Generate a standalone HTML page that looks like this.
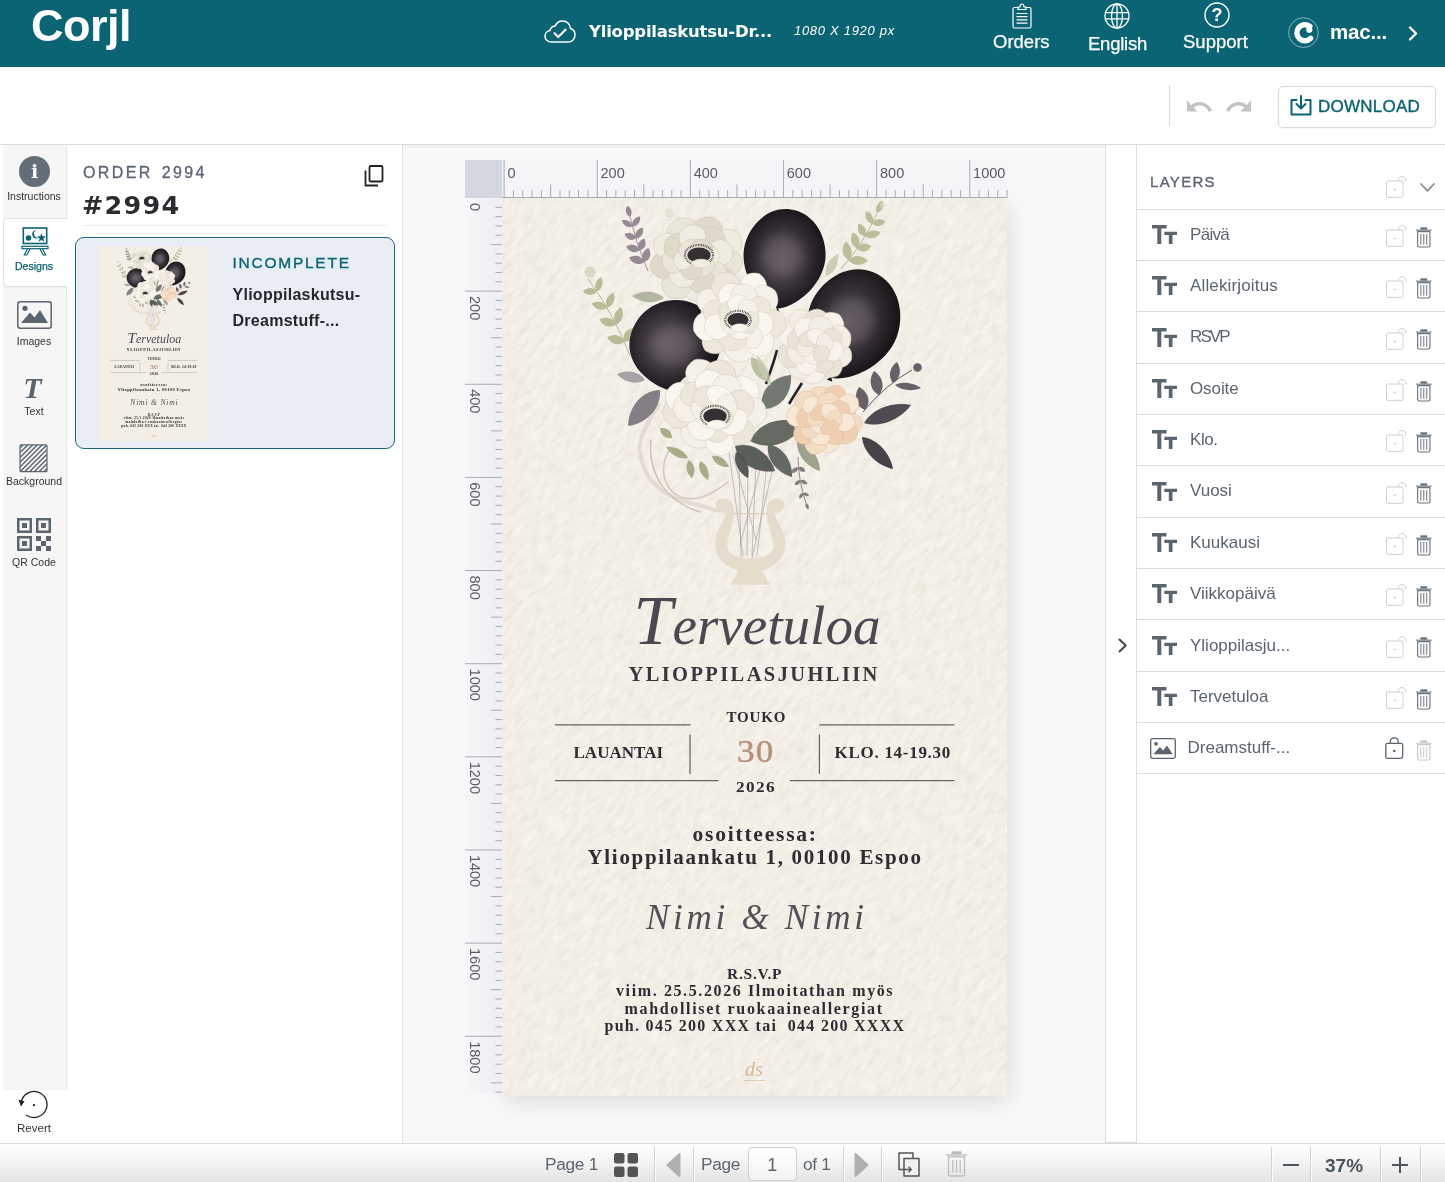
<!DOCTYPE html>
<html lang="en">
<head>
<meta charset="utf-8">
<title>Corjl</title>
<style>
*{box-sizing:border-box;margin:0;padding:0}
html,body{width:1445px;height:1182px;overflow:hidden;background:#fff}
body{position:relative;will-change:transform;font-family:"Liberation Sans",sans-serif;color:#5b6570}
.abs{position:absolute}
.t{position:absolute;white-space:nowrap;line-height:1}
svg{position:absolute;overflow:visible}
/* header */
#hdr{position:absolute;left:0;top:0;width:1445px;height:67px;background:#0b6474}
#hdr .t{color:#fff}
.mont{font-family:"DejaVu Sans","Liberation Sans",sans-serif;font-weight:bold}
/* toolbar */
#tb{position:absolute;left:0;top:67px;width:1445px;height:78px;background:#fff;border-bottom:1px solid #dcdcdc}
/* sidebar */
#side{position:absolute;left:3px;top:145px;width:64px;height:945px;background:#f6f6f6;border-right:1px solid #e6e6e6}
#side .lbl,#revert .lbl{position:absolute;left:-1px;width:64px;text-align:center;font-size:10.5px;line-height:12px;color:#333}
#tab{position:absolute;left:0px;top:73px;width:65px;height:69px;background:#fff;border:1px solid #e4e4e4;border-right:none;border-radius:5px 0 0 5px;box-shadow:0 1px 2px rgba(0,0,0,.05)}
/* left panel */
#lp{position:absolute;left:67px;top:145px;width:336px;height:999px;background:#fff;border-right:1px solid #e2e2e2}
/* work area */
#work{position:absolute;left:403px;top:145px;width:702px;height:999px;background:#f8f8f8;box-shadow:inset 0 4px 4px -3px rgba(0,0,0,.07)}
/* strip */
#strip{position:absolute;left:1105px;top:145px;width:32px;height:998px;background:#fff;border:1px solid #dedede;border-top:none}
/* layers */
#layers{position:absolute;left:1137px;top:145px;width:308px;height:999px;background:#fff}
.row{position:absolute;left:0;width:308px;height:51.3px;border-bottom:1px solid #dcdcdc}
.row .nm{position:absolute;left:53px;top:14.3px;font-size:17px;line-height:22px;color:#5b6570;white-space:nowrap}
/* bottom */
#bot{position:absolute;left:0;top:1143px;width:1445px;height:39px;border-top:1px solid #dadada;background:linear-gradient(#ffffff,#f4f4f4 45%,#e4e4e4)}
#bot .t{color:#5b6570;font-size:17.3px;letter-spacing:-.3px}
.vd{position:absolute;top:3px;width:1px;height:36px;background:#d2d2d2;box-shadow:1px 0 0 rgba(255,255,255,.8)}
</style>
</head>
<body>
<div id="hdr">
  <div class="t" id="logo" style="left:31px;top:-1px;font-size:45px;font-weight:bold;letter-spacing:-0.5px;line-height:54px">Corjl</div>
  <!-- cloud check -->
  <svg style="left:544px;top:20px" width="32" height="23" viewBox="0 0 32 23" fill="none" stroke="#fff" stroke-width="1.5" stroke-linecap="round" stroke-linejoin="round">
    <path d="M7.5 22 C3.5 22 1 19.3 1 16.2 C1 13.2 3.2 10.9 6 10.6 C6.2 7.9 8.5 6 11 6.3 C12.3 3 15.3 1 18.6 1 C23 1 26.3 4.300 26.500 8.500 C29.300 9.200 31 11.700 31 14.800 C31 18.800 28 22 24.200 22 Z"/>
    <path d="M10.500 13.300 L14.200 17 L21.500 9.700" stroke-width="2.2"/>
  </svg>
  <div class="t mont" id="ttl" style="left:589px;top:22px;font-size:16.5px;line-height:20px;letter-spacing:-.22px">Ylioppilaskutsu-Dr...</div>
  <div class="t" id="dim" style="left:794px;top:23px;font-size:13px;line-height:16px;font-style:italic;letter-spacing:0.7px">1080 X 1920 px</div>
  <!-- orders clipboard -->
  <svg style="left:1012px;top:3px" width="20" height="26" viewBox="0 0 20 26" fill="none" stroke="#fff" stroke-width="1.2">
    <rect x="1" y="4.500" width="18" height="20.500" rx="1.5"/>
    <path d="M6 6.500 V4 H8 C8 2.300 8.800 1 10 1 C11.200 1 12 2.300 12 4 H14 V6.500 Z" fill="#0b6474"/>
    <path d="M4.500 10.500 H15.500 M4.500 13.700 H15.500 M4.500 16.900 H15.500 M4.500 20.100 H15.500" stroke-width="1.200"/>
  </svg>
  <div class="t" id="ord" style="left:993px;top:31px;font-size:18.500px;line-height:22px;-webkit-text-stroke:.25px #fff">Orders</div>
  <!-- globe -->
  <svg style="left:1104px;top:3px" width="26" height="26" viewBox="0 0 26 26" fill="none" stroke="#fff" stroke-width="1.300">
    <circle cx="13" cy="13" r="12"/>
    <ellipse cx="13" cy="13" rx="5.500" ry="12"/>
    <path d="M13 1 V25 M1.700 9.700 H24.300 M1.700 15.800 H24.300"/>
  </svg>
  <div class="t" id="eng" style="left:1088px;top:32.500px;font-size:18.500px;line-height:22px;letter-spacing:-.25px;-webkit-text-stroke:.25px #fff">English</div>
  <!-- support -->
  <svg style="left:1204px;top:2px" width="26" height="26" viewBox="0 0 26 26" fill="none" stroke="#fff" stroke-width="1.400">
    <circle cx="13" cy="13" r="12"/>
  </svg>
  <div class="t" style="left:1204px;top:5px;width:26px;text-align:center;font-size:18px;font-weight:bold;line-height:20px">?</div>
  <div class="t" id="sup" style="left:1183px;top:31px;font-size:18.500px;line-height:22px;-webkit-text-stroke:.25px #fff">Support</div>
  <!-- user -->
  <svg style="left:1288px;top:17px" width="31" height="31" viewBox="0 0 31 31" fill="none">
    <circle cx="15.500" cy="15.600" r="14.900" stroke="#8fb9c2" stroke-width=".9"/>
    <path d="M22.600 21.300 A8 8 0 1 1 21.800 9.400" stroke="#fff" stroke-width="5.400" stroke-linecap="round"/>
    <circle cx="21.300" cy="12.800" r="3.100" fill="#fff"/>
  </svg>
  <div class="t" id="mac" style="left:1330px;top:19.500px;font-size:20.500px;line-height:24px;font-weight:bold;letter-spacing:-.2px">mac...</div>
  <svg style="left:1408px;top:26px" width="10" height="15" viewBox="0 0 10 15" fill="none" stroke="#fff" stroke-width="2.400" stroke-linecap="round" stroke-linejoin="round"><path d="M2 1.500 L8 7.500 L2 13.500"/></svg>
</div>
<div id="tb">
  <div class="abs" style="left:1169px;top:18px;width:1px;height:41px;background:#dadada"></div>
  <!-- undo / redo -->
  <svg style="left:1186px;top:32px" width="27" height="14" viewBox="0 0 27 14"><path d="M1 1 L1 12.500 L11.500 12.500 L7.600 8.600 C9.300 7.200 11.400 6.400 13.600 6.400 C17.700 6.400 21.200 9 22.700 12.800 L26 11.700 C24.100 6.600 19.300 3 13.600 3 C10.400 3 7.500 4.200 5.200 6.200 Z" fill="#c3c3c3"/></svg>
  <svg style="left:1225px;top:32px" width="27" height="14" viewBox="0 0 27 14"><path transform="translate(27 0) scale(-1 1)" d="M1 1 L1 12.500 L11.500 12.500 L7.600 8.600 C9.300 7.200 11.400 6.400 13.600 6.400 C17.700 6.400 21.200 9 22.700 12.800 L26 11.700 C24.100 6.600 19.300 3 13.600 3 C10.400 3 7.500 4.200 5.200 6.200 Z" fill="#c3c3c3"/></svg>
  <div class="abs" style="left:1278px;top:18.5px;width:158px;height:42px;border:1px solid #d9d9d9;border-radius:5px;background:#fff;box-shadow:0 1px 1px rgba(0,0,0,.04)"></div>
  <svg style="left:1290px;top:28px" width="22" height="21" viewBox="0 0 22 21" fill="none" stroke="#0b6474" stroke-width="2" stroke-linejoin="round" stroke-linecap="round">
    <path d="M6.500 5 H1.500 V19.500 H20.500 V5 H15.500"/>
    <path d="M11 1 V13 M6.500 9 L11 13.500 L15.500 9"/>
  </svg>
  <div class="t" id="dl" style="left:1318px;top:29.5px;font-size:17px;line-height:20px;color:#0b6474;-webkit-text-stroke:.4px #0b6474;letter-spacing:.25px">DOWNLOAD</div>
</div>
<div id="side">
  <!-- instructions -->
  <svg style="left:16px;top:11px" width="31" height="31" viewBox="0 0 31 31"><circle cx="15.500" cy="15.500" r="15.500" fill="#646e79"/></svg>
  <div class="t" style="left:16px;top:14px;width:31px;text-align:center;font-family:'DejaVu Serif','Liberation Serif',serif;font-weight:bold;font-size:19px;line-height:24px;color:#fff">i</div>
  <div class="lbl" style="top:44.500px">Instructions</div>
  <div id="tab"></div>
  <!-- designs -->
  <svg style="left:18px;top:82px" width="28" height="29" viewBox="0 0 28 29" fill="none" stroke="#0b6474" stroke-width="1.600">
    <rect x="2.300" y="1" width="23.400" height="15.500"/>
    <circle cx="7.500" cy="11" r="2.800" fill="#0b6474" stroke="none"/>
    <path d="M15.500 3 A4.300 4.300 0 1 0 18.500 10.300 A3.600 3.600 0 0 1 15.500 3 Z" fill="#0b6474" stroke="none"/>
    <path d="M20.500 6.200 L21.700 9.300 L25 9.500 L22.400 11.600 L23.300 14.800 L20.500 13 L17.700 14.800 L18.600 11.600 L16 9.500 L19.300 9.300 Z" fill="#0b6474" stroke="none"/>
    <rect x="1" y="19.300" width="26" height="2.400" stroke-width="1.200"/>
    <path d="M6.500 22 L3.300 28 H5.800 L9 22 M21.500 22 L24.700 28 H22.200 L19 22" stroke-width="1.200"/>
  </svg>
  <div class="lbl" style="top:114.500px;color:#0b6474;-webkit-text-stroke:.25px #0b6474">Designs</div>
  <!-- images -->
  <svg style="left:13.500px;top:156px" width="35" height="28" viewBox="0 0 35 28">
    <rect x=".8" y=".8" width="33.400" height="26.400" rx="2.500" fill="none" stroke="#5b6570" stroke-width="1.500"/>
    <circle cx="8" cy="7.300" r="2.600" fill="#5b6570"/>
    <path d="M4 22 L13 11.500 L17.500 16.500 L23 9 L31 22 Z" fill="#5b6570"/>
  </svg>
  <div class="lbl" style="top:189.500px">Images</div>
  <!-- text -->
  <div class="t" style="left:11.500px;top:228px;width:36px;text-align:center;font-family:'Liberation Serif',serif;font-style:italic;font-weight:bold;font-size:30px;line-height:30px;color:#5b6570">T</div>
  <div class="lbl" style="top:259.500px">Text</div>
  <!-- background -->
  <svg style="left:16.200px;top:298.500px" width="29" height="28.500" viewBox="0 0 30 30">
    <defs><clipPath id="bgc"><rect x="1" y="1" width="28" height="28"/></clipPath></defs>
    <g clip-path="url(#bgc)" stroke="#5b6570" stroke-width="1.500">
      <path d="M-30 30 L0 0 M-25 30 L5 0 M-20 30 L10 0 M-15 30 L15 0 M-10 30 L20 0 M-5 30 L25 0 M0 30 L30 0 M5 30 L35 0 M10 30 L40 0 M15 30 L45 0 M20 30 L50 0 M25 30 L55 0 M30 30 L60 0"/>
    </g>
    <rect x=".8" y=".8" width="28.400" height="28.400" rx="1" fill="none" stroke="#5b6570" stroke-width="1.300"/>
  </svg>
  <div class="lbl" style="top:330px">Background</div>
  <!-- qr -->
  <svg style="left:14px;top:373px" width="34" height="33" viewBox="0 0 34 33" fill="#5b6570">
    <path fill-rule="evenodd" d="M0 0 H15 V15 H0 Z M2.500 2.500 V12.500 H12.500 V2.500 Z M5 5 H10 V10 H5 Z"/>
    <path fill-rule="evenodd" d="M19 0 H34 V15 H19 Z M21.500 2.500 V12.500 H31.500 V2.500 Z M24 5 H29 V10 H24 Z"/>
    <path fill-rule="evenodd" d="M0 18 H15 V33 H0 Z M2.500 20.500 V30.500 H12.500 V20.500 Z M5 23 H10 V28 H5 Z"/>
    <path d="M19 18 H24 V23 H19 Z M29 18 H34 V23 H29 Z M24 23 H29 V28 H24 Z M19 28 H24 V33 H19 Z M29 28 H34 V33 H29 Z"/>
  </svg>
  <div class="lbl" style="top:411px">QR Code</div>
</div>
<!-- revert -->
<div id="revert" class="abs" style="left:3px;top:1090px;width:64px;height:53px;background:#fff">
  <svg style="left:15.500px;top:-0.400px" width="30" height="30" viewBox="0 0 30 30" fill="none" stroke="#222" stroke-width="1.300">
    <path d="M2.200 12.300 A13 13 0 1 1 7.600 25.200" stroke-linecap="round"/>
    <path d="M-0.500 9.800 L5.500 11.300 L2 16.500 Z" fill="#222" stroke="none"/>
    <circle cx="15" cy="15.200" r="1.100" fill="#222" stroke="none"/>
  </svg>
  <div class="lbl" style="top:31.500px;font-size:11.500px">Revert</div>
</div>
<div id="lp">
  <div class="t" id="ordl" style="left:16px;top:19px;font-size:16px;line-height:18px;letter-spacing:2.4px;color:#5b6570;-webkit-text-stroke:.3px #5b6570;word-spacing:2px">ORDER 2994</div>
  <div class="t mont" id="ordn" style="left:15px;top:44.500px;font-size:25.500px;line-height:30px;color:#2a2c30;letter-spacing:1.2px">#2994</div>
  <svg style="left:297px;top:20px" width="20" height="22" viewBox="0 0 20 22" fill="none" stroke="#222" stroke-width="1.800" stroke-linejoin="round">
    <rect x="5.500" y="1" width="13" height="15.500" rx="1.200"/>
    <path d="M1.500 5.500 V20.500 H14"/>
  </svg>
  <div class="abs" style="left:16px;top:80px;width:304px;height:1px;background:#ececec"></div>
  <div class="abs" id="card" style="left:8px;top:92px;width:320px;height:212px;border:1.500px solid #176b7a;border-radius:9px;background:#e8eef3"></div>
  <div class="t" id="inc" style="left:165.500px;top:108.5px;font-size:15.500px;line-height:18px;letter-spacing:1.750px;color:#0b6474;-webkit-text-stroke:.35px #0b6474">INCOMPLETE</div>
  <div class="t" id="nm1" style="left:165.500px;top:137px;font-size:16px;line-height:26px;font-weight:bold;color:#24282c;letter-spacing:.27px">Ylioppilaskutsu-<br>Dreamstuff-...</div>
  <svg id="thumb" style="left:32.200px;top:101.300px" width="109.700" height="195.100" viewBox="502 198 505 898">
<rect x="502" y="198" width="505" height="898" fill="#f3efe7"/>
<g fill="none" stroke="#d6cbc3" stroke-linecap="round">
<path d="M659 405 C645 425 638 440 640 452 C643 478 660 495 690 503 C700 505 710 508 718 511" stroke-width="4" opacity=".55"/>
<path d="M668 452 C660 468 662 488 680 497 C697 503 712 494 728 482" stroke-width="1.8"/>
<path d="M651 440 C648 470 662 500 700 512" stroke-width="1.4" stroke="#c9bcb2"/>
</g>
<g fill="none" stroke="#9a98a4" stroke-width="0.6">
<path d="M729 452 L743 556"/>
<path d="M739 460 L741 558"/>
<path d="M748 462 L747 556"/>
<path d="M756 462 L752 556"/>
<path d="M768 455 L757 556"/>
<path d="M777 450 L752 558"/>
<path d="M733 455 L756 540"/>
<path d="M760 470 L740 545"/>
</g>
<g transform="translate(620 420) scale(0.19376)"><path d="M672 850 L568 850 Q600 800 610 775 C540 760 480 700 492 620 C500 560 540 520 548 480 C520 480 490 460 495 430 C500 400 560 395 580 430 C592 455 585 480 585 500 C580 560 545 620 555 660 C565 700 620 715 672 715 C724 715 779 700 789 660 C799 620 764 560 759 500 C759 480 752 455 764 430 C784 395 844 400 849 430 C854 460 824 480 796 480 C804 520 844 560 852 620 C864 700 804 760 734 775 Q744 800 776 850 Z" fill="#e5dccb"/><path d="M585 483 H760" stroke="#dccfba" stroke-width="6" fill="none"/></g>
<path d="M648.0 271.0 Q636.3 244.9 630.0 217.0" fill="none" stroke="#8b8189" stroke-width="0.9" opacity="0.9"/>
<path d="M644.1 261.9 C641.8 254.8 635.2 254.7 630.5 257.7 C632.7 262.8 638.2 266.5 644.1 261.9Z" fill="#8b8189" opacity="0.9"/>
<path d="M644.1 261.9 C651.4 261.1 652.8 254.7 650.7 249.7 C645.2 250.7 640.7 255.3 644.1 261.9Z" fill="#8b8189" opacity="0.9"/>
<path d="M639.7 250.3 C638.0 243.5 631.7 242.7 626.9 244.9 C628.6 249.9 633.7 253.9 639.7 250.3Z" fill="#8b8189" opacity="0.9"/>
<path d="M639.7 250.3 C646.5 248.3 647.2 241.7 644.9 236.9 C639.9 238.9 636.0 244.3 639.7 250.3Z" fill="#8b8189" opacity="0.9"/>
<path d="M635.8 238.6 C633.6 232.5 627.7 232.3 623.5 234.7 C625.5 239.1 630.6 242.3 635.8 238.6Z" fill="#8b8189" opacity="0.9"/>
<path d="M635.8 238.6 C641.9 237.4 642.6 232.0 640.5 227.9 C636.0 229.1 632.5 233.3 635.8 238.6Z" fill="#8b8189" opacity="0.9"/>
<path d="M632.4 226.6 C630.9 220.8 625.2 219.5 620.9 221.0 C622.3 225.3 626.9 229.1 632.4 226.6Z" fill="#8b8189" opacity="0.9"/>
<path d="M632.4 226.6 C638.0 225.8 639.0 220.8 637.4 216.9 C633.2 217.9 629.8 221.6 632.4 226.6Z" fill="#8b8189" opacity="0.9"/>
<path d="M630.0 217.0 C633.3 212.6 630.9 207.6 627.4 205.4 C625.1 208.9 625.1 214.4 630.0 217.0Z" fill="#8b8189" opacity="0.9"/>
<path d="M630.0 356.0 Q614.4 314.6 588.0 279.0" fill="none" stroke="#a9ad8a" stroke-width="0.9" opacity="0.95"/>
<path d="M624.2 341.8 C620.7 333.1 611.3 332.2 604.9 335.2 C608.2 341.5 616.2 346.5 624.2 341.8Z" fill="#b4b892" opacity="0.95"/>
<path d="M624.2 341.8 C633.0 340.3 634.8 332.2 632.6 326.0 C626.1 327.6 620.5 333.7 624.2 341.8Z" fill="#b4b892" opacity="0.95"/>
<path d="M616.1 324.5 C614.3 316.8 607.3 316.3 602.2 319.2 C604.1 324.8 609.7 328.9 616.1 324.5Z" fill="#b4b892" opacity="0.95"/>
<path d="M616.1 324.5 C624.1 323.4 625.9 316.2 623.8 310.5 C617.9 311.8 612.8 317.2 616.1 324.5Z" fill="#b4b892" opacity="0.95"/>
<path d="M607.0 307.7 C603.3 301.6 596.9 302.9 593.2 306.8 C596.4 311.1 602.5 313.3 607.0 307.7Z" fill="#b4b892" opacity="0.95"/>
<path d="M607.0 307.7 C614.1 304.6 614.5 297.0 611.7 291.8 C606.6 294.6 602.8 301.3 607.0 307.7Z" fill="#b4b892" opacity="0.95"/>
<path d="M596.9 291.5 C592.7 286.1 586.3 287.6 582.7 291.3 C586.2 295.1 592.5 296.8 596.9 291.5Z" fill="#b4b892" opacity="0.95"/>
<path d="M596.9 291.5 C603.2 289.4 603.6 283.2 601.1 278.8 C596.5 280.8 593.1 286.0 596.9 291.5Z" fill="#b4b892" opacity="0.95"/>
<circle cx="590" cy="272" r="5.500" fill="#d3d4ba" opacity=".85"/>
<circle cx="669" cy="213" r="4.500" fill="#dcdccb" opacity=".7"/>
<path d="M841.0 269.0 Q863.5 243.9 877.0 213.0" fill="none" stroke="#a9ad8a" stroke-width="0.9" opacity="0.95"/>
<path d="M848.5 260.1 C854.4 254.0 850.8 247.7 845.2 245.0 C841.2 249.9 840.7 257.1 848.5 260.1Z" fill="#b8bb95" opacity="0.95"/>
<path d="M848.5 260.1 C854.1 266.6 861.1 263.7 864.5 258.3 C860.0 253.9 852.6 252.6 848.5 260.1Z" fill="#b8bb95" opacity="0.95"/>
<path d="M857.2 248.5 C862.3 242.3 858.7 235.9 853.3 233.3 C849.9 238.2 849.8 245.5 857.2 248.5Z" fill="#b8bb95" opacity="0.95"/>
<path d="M857.2 248.5 C862.8 254.4 869.9 251.6 873.5 246.7 C868.9 242.6 861.4 241.5 857.2 248.5Z" fill="#b8bb95" opacity="0.95"/>
<path d="M865.0 236.3 C869.0 230.2 865.0 225.1 859.9 223.5 C857.3 228.2 858.0 234.6 865.0 236.3Z" fill="#b8bb95" opacity="0.95"/>
<path d="M865.0 236.3 C869.9 242.0 876.7 239.9 880.4 235.6 C876.3 231.6 869.4 230.2 865.0 236.3Z" fill="#b8bb95" opacity="0.95"/>
<path d="M872.0 223.6 C874.7 217.4 870.4 213.0 865.5 211.9 C863.8 216.6 865.4 222.7 872.0 223.6Z" fill="#b8bb95" opacity="0.95"/>
<path d="M872.0 223.6 C877.3 228.0 883.4 225.2 886.2 220.9 C882.0 217.9 875.3 217.5 872.0 223.6Z" fill="#b8bb95" opacity="0.95"/>
<path d="M877.0 213.0 C883.1 211.3 884.1 205.2 882.3 200.8 C877.9 202.5 874.1 207.4 877.0 213.0Z" fill="#b8bb95" opacity="0.95"/>
<circle cx="882" cy="205" r="2.500" fill="#d3d4ba" opacity=".8"/>
<path d="M826.0 276.0 C835.7 272.8 839.3 261.8 838.0 254.0 C830.7 257.2 823.5 266.0 826.0 276.0Z" fill="#c3c6a6" opacity="0.8"/>
<path d="M863 412 Q885 385 912 370" fill="none" stroke="#5f5860" stroke-width="1"/>
<path d="M865.0 410.0 C872.4 400.7 866.9 391.1 859.0 387.0 C854.1 394.4 854.0 405.5 865.0 410.0Z" fill="#5f5860" opacity="0.95"/>
<path d="M879.0 395.0 C886.3 386.0 881.4 375.7 874.0 371.0 C869.1 378.3 868.7 389.6 879.0 395.0Z" fill="#5f5860" opacity="0.95"/>
<path d="M893.0 383.0 C901.6 378.1 901.2 368.2 897.0 362.0 C890.8 366.3 886.8 375.3 893.0 383.0Z" fill="#5f5860" opacity="0.95"/>
<path d="M895.0 385.0 C902.2 391.4 914.1 391.1 921.0 388.0 C914.9 383.4 903.4 380.4 895.0 385.0Z" fill="#5f5860" opacity="0.95"/>
<circle cx="917.500" cy="367.500" r="4.300" fill="#5f5860" opacity=".95"/>
<path d="M864.0 423.0 C882.4 428.8 902.3 417.3 911.0 405.0 C896.2 401.7 873.8 406.4 864.0 423.0Z" fill="#4a454c" opacity="0.97"/>
<path d="M862.0 437.0 C863.4 454.3 879.7 466.4 893.0 469.0 C890.8 455.6 879.2 438.9 862.0 437.0Z" fill="#403c42" opacity="0.97"/>
<path d="M660.0 390.0 C639.2 390.8 628.2 410.0 628.0 426.0 C643.8 424.0 661.6 410.8 660.0 390.0Z" fill="#7a757c" opacity="0.92"/>
<path d="M645.0 380.0 C638.3 370.4 625.2 370.0 617.0 374.0 C622.8 381.0 634.9 386.0 645.0 380.0Z" fill="#9a949a" opacity="0.85"/>
<path d="M664.0 298.0 C654.9 289.4 640.3 290.9 632.0 296.0 C639.7 302.1 653.9 305.4 664.0 298.0Z" fill="#9ea28c" opacity="0.75"/>
<path d="M668.0 305.0 C657.1 303.5 645.2 310.9 640.0 318.0 C648.8 318.6 662.1 314.3 668.0 305.0Z" fill="#b7b9a4" opacity="0.7"/>
<g transform="rotate(8 784.0 259.0)">
<path d="M784.0 209.0 C809.4 209.0 825.0 234.0 825.0 255.0 C825.0 281.5 801.2 306.0 784.0 309.0 C766.8 306.0 743.0 281.5 743.0 255.0 C743.0 234.0 758.6 209.0 784.0 209.0Z" fill="url(#bg1)"/>
<ellipse cx="782.0" cy="256.5" rx="20.5" ry="21.0" fill="#8a8088" opacity="0.32" filter="url(#blur4)"/>
<path d="M781.0 312.0 L784.0 307.5 L787.0 312.0Z" fill="#1b181c"/>
</g>
<g transform="rotate(22 852.0 325.0)">
<path d="M852.0 268.0 C880.5 268.0 898.0 296.5 898.0 320.4 C898.0 350.6 871.3 378.6 852.0 382.0 C832.7 378.6 806.0 350.6 806.0 320.4 C806.0 296.5 823.5 268.0 852.0 268.0Z" fill="url(#bg2)"/>
<ellipse cx="849.7" cy="322.1" rx="23.0" ry="23.9" fill="#8a8088" opacity="0.32" filter="url(#blur4)"/>
<path d="M849.0 385.0 L852.0 380.5 L855.0 385.0Z" fill="#1b181c"/>
</g>
<g transform="rotate(-12 676.0 347.0)">
<path d="M676.0 300.0 C704.5 300.0 722.0 323.5 722.0 343.2 C722.0 368.1 695.3 391.2 676.0 394.0 C656.7 391.2 630.0 368.1 630.0 343.2 C630.0 323.5 647.5 300.0 676.0 300.0Z" fill="url(#bg3)"/>
<ellipse cx="673.7" cy="344.6" rx="23.0" ry="19.7" fill="#8a8088" opacity="0.32" filter="url(#blur4)"/>
</g>
<path d="M777 350 C774 362 770 372 766 384" stroke="#242126" stroke-width="2.6" fill="none"/>
<path d="M802 383 C797 391 793 397 789 404" stroke="#242126" stroke-width="2.6" fill="none"/>
<path d="M797.0 441.0 C796.0 456.1 808.7 467.8 820.0 471.0 C819.8 459.2 811.8 443.9 797.0 441.0Z" fill="#969c85" opacity="0.92"/>
<path d="M762.0 409.0 C782.9 409.2 792.3 390.8 791.0 375.0 C775.2 376.2 758.5 388.4 762.0 409.0Z" fill="#6f746d" opacity="0.97"/>
<path d="M768.0 444.0 C765.5 461.0 779.2 473.7 792.0 477.0 C792.8 463.8 784.9 446.8 768.0 444.0Z" fill="#5f645e" opacity="0.97"/>
<path d="M735.0 446.0 C739.1 466.2 759.4 473.7 775.0 471.0 C770.6 455.8 754.9 440.8 735.0 446.0Z" fill="#555a55" opacity="0.97"/>
<path d="M750.0 441.0 C771.6 453.1 794.3 440.3 804.0 424.0 C786.7 416.2 760.8 418.7 750.0 441.0Z" fill="#626760" opacity="0.98"/>
<path d="M736.0 452.0 C732.3 463.2 739.9 473.8 748.0 478.0 C750.1 469.2 746.9 456.4 736.0 452.0Z" fill="#4e534f" opacity="0.95"/>
<path d="M798.0 457.0 Q798.3 480.6 806.0 503.0" fill="none" stroke="#77736f" stroke-width="0.9" opacity="0.9"/>
<path d="M798.5 467.4 C798.8 471.6 802.5 472.9 805.6 472.2 C805.1 469.1 802.5 466.1 798.5 467.4Z" fill="#77736f" opacity="0.9"/>
<path d="M798.5 467.4 C794.7 465.9 792.1 468.7 791.6 471.8 C794.6 472.6 798.2 471.5 798.5 467.4Z" fill="#77736f" opacity="0.9"/>
<path d="M800.2 480.3 C801.3 484.1 805.2 484.8 808.0 483.8 C806.9 481.0 803.7 478.6 800.2 480.3Z" fill="#77736f" opacity="0.9"/>
<path d="M800.2 480.3 C796.3 480.3 794.7 483.6 795.1 486.5 C797.9 486.3 800.9 484.1 800.2 480.3Z" fill="#77736f" opacity="0.9"/>
<path d="M803.0 493.0 C804.5 496.0 808.0 496.0 810.2 494.6 C808.8 492.4 805.7 490.9 803.0 493.0Z" fill="#77736f" opacity="0.9"/>
<path d="M803.0 493.0 C799.6 492.7 797.9 495.6 797.9 498.2 C800.5 498.2 803.3 496.4 803.0 493.0Z" fill="#77736f" opacity="0.9"/>
<path d="M806.0 503.0 C804.5 505.7 806.2 508.5 808.3 509.6 C809.3 507.4 808.9 504.2 806.0 503.0Z" fill="#77736f" opacity="0.9"/>
<path d="M767.0 381.0 C769.7 368.8 760.2 359.5 751.0 357.0 C749.8 366.5 754.7 378.8 767.0 381.0Z" fill="#b7ba98" opacity="0.9"/>
<path d="M757.0 356.0 C755.8 367.5 763.7 380.3 771.0 386.0 C771.3 376.7 766.6 362.5 757.0 356.0Z" fill="#c6c9ad" opacity="0.8"/>
<path d="M688.0 458.0 C684.1 449.3 673.4 446.0 666.0 447.0 C669.6 453.5 678.7 460.1 688.0 458.0Z" fill="#a5a883" opacity="0.95"/>
<path d="M689.0 460.0 C684.0 466.4 687.1 474.2 692.0 478.0 C695.4 472.8 695.8 464.4 689.0 460.0Z" fill="#a5a883" opacity="0.95"/>
<path d="M700.0 461.0 C696.9 469.0 702.1 476.9 708.0 480.0 C709.9 473.6 707.9 464.4 700.0 461.0Z" fill="#a5a883" opacity="0.95"/>
<path d="M712.0 456.0 C713.8 464.3 722.5 467.8 729.0 467.0 C727.0 460.7 720.4 454.3 712.0 456.0Z" fill="#a5a883" opacity="0.95"/>
<path d="M672.0 438.0 C672.2 430.4 665.7 427.3 660.0 428.0 C660.3 433.7 664.6 439.6 672.0 438.0Z" fill="#a5a883" opacity="0.95"/>
<g transform="translate(697.0 259.0) rotate(-15) scale(1 0.9) translate(-697.0 -259.0)">
<circle cx="697.0" cy="259.0" r="40.3" fill="#dfdaca"/>
<path d="M708.0 247.0 C715.8 250.5 725.7 249.6 732.0 242.8 C738.0 236.2 734.2 227.3 730.5 222.5 C725.5 219.3 716.2 216.2 710.2 222.8 C703.9 229.6 703.8 239.5 708.0 247.0Z" fill="#e9e5d8" stroke="#c5bea9" stroke-width="0.45" opacity="1"/>
<path d="M713.3 257.9 C716.4 266.2 723.9 272.7 732.9 272.1 C741.5 271.6 744.8 262.1 745.3 255.9 C744.0 249.8 739.5 240.8 730.9 241.3 C721.9 241.9 715.3 249.3 713.3 257.9Z" fill="#dfdaca" stroke="#c5bea9" stroke-width="0.45" opacity="1"/>
<path d="M709.2 269.8 C705.7 277.7 706.6 287.4 713.4 293.4 C719.9 299.1 728.7 294.9 733.4 291.1 C736.6 286.0 739.7 276.7 733.1 270.9 C726.4 264.9 716.6 265.3 709.2 269.8Z" fill="#efece1" stroke="#c5bea9" stroke-width="0.45" opacity="1"/>
<path d="M702.8 274.2 C696.1 279.7 692.5 288.9 695.8 297.6 C699.0 306.0 708.8 306.5 714.7 305.3 C720.0 302.2 726.9 295.3 723.7 286.9 C720.3 278.2 711.5 273.8 702.8 274.2Z" fill="#e9e5d8" stroke="#c5bea9" stroke-width="0.45" opacity="1"/>
<path d="M688.3 272.8 C680.4 271.0 671.1 274.0 666.1 282.0 C661.2 289.7 666.2 297.6 670.4 301.5 C675.7 303.6 684.9 304.6 689.8 296.9 C694.8 288.8 693.4 279.2 688.3 272.8Z" fill="#dfdaca" stroke="#c5bea9" stroke-width="0.45" opacity="1"/>
<path d="M682.4 266.3 C676.8 260.9 667.6 258.8 659.3 262.9 C651.3 266.9 651.3 275.8 652.8 281.0 C656.0 285.3 663.1 290.7 671.1 286.7 C679.4 282.6 683.3 274.0 682.4 266.3Z" fill="#efece1" stroke="#c5bea9" stroke-width="0.45" opacity="1"/>
<path d="M681.2 254.9 C680.7 247.0 675.7 239.4 667.4 237.3 C659.3 235.2 653.7 242.1 651.4 247.1 C650.9 252.6 652.5 261.4 660.5 263.5 C668.8 265.7 676.9 261.5 681.2 254.9Z" fill="#e9e5d8" stroke="#c5bea9" stroke-width="0.45" opacity="1"/>
<path d="M686.3 246.7 C690.2 239.8 689.9 230.2 683.8 223.1 C677.8 216.3 669.0 218.6 664.3 221.4 C660.8 225.7 657.3 234.1 663.3 240.9 C669.4 248.0 678.9 249.6 686.3 246.7Z" fill="#dfdaca" stroke="#c5bea9" stroke-width="0.45" opacity="1"/>
<path d="M697.5 242.7 C706.1 240.4 713.2 233.6 713.5 224.7 C713.7 216.1 704.5 212.0 698.4 210.9 C692.1 211.7 682.7 215.2 682.5 223.8 C682.2 232.7 689.0 239.9 697.5 242.7Z" fill="#efece1" stroke="#c5bea9" stroke-width="0.45" opacity="1"/>
<path d="M703.8 262.6 C702.1 270.8 704.7 279.6 712.0 283.6 C719.1 287.4 726.4 281.4 729.9 276.7 C731.9 271.2 732.8 261.8 725.8 258.0 C718.5 254.1 709.6 256.7 703.8 262.6Z" fill="#dfdaca" stroke="#c5bea9" stroke-width="0.45" opacity="1"/>
<path d="M698.5 266.5 C692.0 270.4 687.6 278.2 689.3 286.7 C691.0 294.9 699.4 297.0 704.7 296.9 C709.6 294.9 716.6 289.7 714.9 281.5 C713.2 273.0 706.1 267.5 698.5 266.5Z" fill="#efece1" stroke="#c5bea9" stroke-width="0.45" opacity="1"/>
<path d="M693.4 265.8 C685.3 264.1 676.5 266.7 672.8 273.8 C669.1 280.7 675.2 287.9 679.9 291.3 C685.5 293.3 694.8 294.3 698.4 287.4 C702.2 280.2 699.4 271.6 693.4 265.8Z" fill="#e9e5d8" stroke="#c5bea9" stroke-width="0.45" opacity="1"/>
<path d="M689.4 260.3 C686.0 253.7 679.0 249.1 671.3 250.4 C663.8 251.6 661.8 259.8 661.8 264.9 C663.5 269.8 668.1 276.9 675.5 275.6 C683.3 274.3 688.4 267.6 689.4 260.3Z" fill="#dfdaca" stroke="#c5bea9" stroke-width="0.45" opacity="1"/>
<path d="M690.1 255.7 C691.2 248.0 688.1 239.9 681.0 236.5 C674.0 233.2 667.5 239.1 664.4 243.6 C662.9 248.9 662.5 257.7 669.4 261.0 C676.6 264.3 684.8 261.5 690.1 255.7Z" fill="#efece1" stroke="#c5bea9" stroke-width="0.45" opacity="1"/>
<path d="M695.0 251.6 C701.0 247.6 704.8 240.2 702.8 232.5 C700.9 225.0 692.8 223.6 687.8 224.0 C683.2 226.1 676.9 231.3 678.9 238.8 C680.9 246.5 687.9 251.1 695.0 251.6Z" fill="#e9e5d8" stroke="#c5bea9" stroke-width="0.45" opacity="1"/>
<path d="M700.6 252.2 C708.3 253.7 716.8 251.0 720.6 243.8 C724.2 236.9 718.6 230.0 714.1 226.6 C708.8 224.8 699.9 224.1 696.3 231.0 C692.5 238.1 695.0 246.6 700.6 252.2Z" fill="#dfdaca" stroke="#c5bea9" stroke-width="0.45" opacity="1"/>
<path d="M704.6 257.7 C708.2 264.7 715.8 269.6 724.2 268.2 C732.2 266.8 734.4 258.2 734.4 252.6 C732.6 247.4 727.6 240.0 719.6 241.4 C711.2 242.8 705.7 249.9 704.6 257.7Z" fill="#efece1" stroke="#c5bea9" stroke-width="0.45" opacity="1"/>
<path d="M695.6 257.6 C699.4 251.7 700.2 244.7 696.4 240.8 C692.6 237.1 685.7 240.7 681.7 243.8 C678.6 247.8 675.0 254.8 678.8 258.5 C682.7 262.3 689.7 261.4 695.6 257.6Z" fill="#efece1" stroke="#c5bea9" stroke-width="0.45" opacity="1"/>
<path d="M697.5 257.2 C704.5 257.4 711.1 254.2 712.9 248.3 C714.5 242.6 708.2 238.0 703.7 236.0 C698.8 235.3 691.0 235.8 689.3 241.5 C687.6 247.4 691.6 253.6 697.5 257.2Z" fill="#e9e5d8" stroke="#c5bea9" stroke-width="0.45" opacity="1"/>
<path d="M698.8 258.4 C702.3 263.4 708.2 266.6 713.7 264.7 C718.9 262.8 719.1 255.9 718.3 251.6 C716.3 247.7 711.8 242.4 706.6 244.2 C701.1 246.1 698.4 252.2 698.8 258.4Z" fill="#dfdaca" stroke="#c5bea9" stroke-width="0.45" opacity="1"/>
<path d="M698.4 260.3 C695.4 265.7 695.1 272.1 699.0 276.0 C702.8 279.7 709.0 276.7 712.4 274.0 C715.0 270.5 717.8 264.3 714.0 260.6 C710.1 256.7 703.6 257.2 698.4 260.3Z" fill="#efece1" stroke="#c5bea9" stroke-width="0.45" opacity="1"/>
<path d="M696.7 260.9 C690.3 261.6 684.7 265.2 683.9 270.7 C683.1 276.0 689.5 279.4 693.9 280.6 C698.4 280.7 705.5 279.3 706.3 274.0 C707.1 268.4 702.6 263.4 696.7 260.9Z" fill="#e9e5d8" stroke="#c5bea9" stroke-width="0.45" opacity="1"/>
<path d="M695.2 259.8 C691.4 254.9 685.5 252.2 680.5 254.4 C675.7 256.5 676.2 263.4 677.5 267.7 C679.8 271.4 684.6 276.5 689.4 274.3 C694.3 272.1 696.3 265.9 695.2 259.8Z" fill="#dfdaca" stroke="#c5bea9" stroke-width="0.45" opacity="1"/>
</g>
<ellipse cx="699.0" cy="255.0" rx="14.1" ry="10.1" fill="none" stroke="#4a4545" stroke-width="2" stroke-dasharray="0.8 0.9"/>
<ellipse cx="699.0" cy="255.0" rx="11.6" ry="7.6" fill="#353132"/>
<ellipse cx="701.0" cy="263.6" rx="9.6" ry="4.5" fill="#efece1" stroke="#c5bea9" stroke-width=".4"/>
<g transform="translate(815.0 346.0) rotate(20) scale(1 0.98) translate(-815.0 -346.0)">
<circle cx="815.0" cy="346.0" r="32.8" fill="#eae3d7"/>
<path d="M825.9 353.5 C823.6 360.4 824.8 368.1 830.4 372.0 C835.9 375.7 842.6 371.2 846.1 367.4 C848.3 362.9 850.2 355.0 844.8 351.2 C839.1 347.3 831.5 348.9 825.9 353.5Z" fill="#f3eee5" stroke="#d2c5b5" stroke-width="0.45" opacity="1"/>
<path d="M818.6 358.8 C813.2 362.4 809.8 369.0 811.7 375.8 C813.6 382.2 820.9 383.3 825.5 382.8 C829.6 380.8 835.3 376.1 833.5 369.6 C831.5 362.9 825.1 359.0 818.6 358.8Z" fill="#eae3d7" stroke="#d2c5b5" stroke-width="0.45" opacity="1"/>
<path d="M811.3 358.7 C804.9 359.0 798.5 363.0 796.5 369.9 C794.5 376.6 800.0 381.4 804.0 383.4 C808.4 383.9 815.7 382.8 817.6 376.2 C819.7 369.2 816.5 362.4 811.3 358.7Z" fill="#f7f3ec" stroke="#d2c5b5" stroke-width="0.45" opacity="1"/>
<path d="M803.6 352.7 C798.4 348.3 790.4 346.9 783.6 350.9 C777.1 354.8 777.7 362.6 779.4 367.0 C782.5 370.7 789.0 375.0 795.5 371.1 C802.3 367.1 804.9 359.5 803.6 352.7Z" fill="#f3eee5" stroke="#d2c5b5" stroke-width="0.45" opacity="1"/>
<path d="M801.7 345.9 C799.8 339.9 794.4 334.9 787.5 334.9 C780.8 334.8 777.8 341.4 777.0 345.8 C777.7 350.2 780.7 356.8 787.3 356.8 C794.3 356.9 799.7 352.0 801.7 345.9Z" fill="#eae3d7" stroke="#d2c5b5" stroke-width="0.45" opacity="1"/>
<path d="M804.0 338.5 C806.3 331.7 804.8 323.9 798.9 319.9 C793.3 316.0 786.5 320.5 783.1 324.2 C780.9 328.8 779.2 336.7 784.8 340.6 C790.7 344.6 798.5 343.1 804.0 338.5Z" fill="#f7f3ec" stroke="#d2c5b5" stroke-width="0.45" opacity="1"/>
<path d="M810.0 333.7 C815.7 329.3 819.0 322.1 816.4 315.8 C813.9 309.6 805.7 309.8 800.7 311.1 C796.3 313.7 790.3 319.3 792.8 325.4 C795.4 331.8 802.7 334.6 810.0 333.7Z" fill="#f3eee5" stroke="#d2c5b5" stroke-width="0.45" opacity="1"/>
<path d="M819.3 333.5 C826.1 333.7 833.0 330.2 835.3 323.6 C837.4 317.3 831.7 312.1 827.4 309.9 C822.6 309.0 814.9 309.5 812.7 315.9 C810.5 322.5 813.8 329.4 819.3 333.5Z" fill="#eae3d7" stroke="#d2c5b5" stroke-width="0.45" opacity="1"/>
<path d="M824.8 337.1 C831.1 340.9 839.3 341.3 844.8 336.4 C850.1 331.6 847.3 323.8 844.4 319.4 C840.4 316.2 832.9 312.6 827.6 317.3 C822.1 322.3 821.7 330.5 824.8 337.1Z" fill="#f7f3ec" stroke="#d2c5b5" stroke-width="0.45" opacity="1"/>
<path d="M828.2 347.3 C829.7 353.7 835.1 359.3 842.7 360.1 C849.9 360.8 853.8 354.4 855.1 349.9 C854.7 345.4 852.1 338.3 844.9 337.6 C837.4 336.8 831.0 341.3 828.2 347.3Z" fill="#f3eee5" stroke="#d2c5b5" stroke-width="0.45" opacity="1"/>
<path d="M811.2 351.0 C805.2 348.8 797.9 350.2 793.6 355.7 C789.6 361.0 793.1 367.4 796.1 370.7 C800.1 372.8 807.2 374.5 811.3 369.2 C815.5 363.6 814.9 356.2 811.2 351.0Z" fill="#eae3d7" stroke="#d2c5b5" stroke-width="0.45" opacity="1"/>
<path d="M808.8 345.9 C807.0 340.1 801.9 335.3 795.4 335.2 C789.1 335.1 786.2 341.3 785.4 345.5 C786.0 349.7 788.7 356.1 795.0 356.2 C801.6 356.3 806.8 351.6 808.8 345.9Z" fill="#f7f3ec" stroke="#d2c5b5" stroke-width="0.45" opacity="1"/>
<path d="M810.7 341.5 C813.9 335.6 813.9 327.8 808.9 322.7 C804.2 317.7 797.0 320.3 793.0 323.0 C790.2 326.8 787.2 333.8 792.0 338.8 C796.9 344.0 804.6 344.5 810.7 341.5Z" fill="#f3eee5" stroke="#d2c5b5" stroke-width="0.45" opacity="1"/>
<path d="M815.1 339.8 C821.5 337.9 826.8 332.5 827.0 325.5 C827.1 318.8 820.3 315.6 815.7 314.8 C811.1 315.4 804.1 318.2 804.0 325.0 C803.8 332.0 808.9 337.6 815.1 339.8Z" fill="#eae3d7" stroke="#d2c5b5" stroke-width="0.45" opacity="1"/>
<path d="M818.9 341.1 C824.7 343.2 831.8 342.1 835.9 336.8 C839.9 331.7 836.6 325.5 833.7 322.2 C829.9 320.1 823.0 318.4 819.0 323.5 C814.9 328.8 815.4 335.9 818.9 341.1Z" fill="#f7f3ec" stroke="#d2c5b5" stroke-width="0.45" opacity="1"/>
<path d="M821.2 345.0 C823.9 350.4 829.5 354.3 835.7 353.3 C841.6 352.2 843.2 345.5 843.2 341.2 C841.8 337.2 838.1 331.4 832.2 332.4 C826.0 333.4 821.9 338.9 821.2 345.0Z" fill="#f3eee5" stroke="#d2c5b5" stroke-width="0.45" opacity="1"/>
<path d="M819.9 349.9 C817.3 356.2 818.2 363.8 823.6 368.1 C828.8 372.3 835.5 368.5 839.1 365.3 C841.5 361.1 843.6 353.6 838.5 349.5 C833.1 345.2 825.5 346.0 819.9 349.9Z" fill="#eae3d7" stroke="#d2c5b5" stroke-width="0.45" opacity="1"/>
<path d="M815.4 352.2 C809.0 354.7 803.9 360.6 804.4 367.7 C804.8 374.6 812.2 377.1 817.1 377.6 C821.8 376.5 828.8 373.0 828.3 366.2 C827.9 359.1 822.1 353.8 815.4 352.2Z" fill="#f7f3ec" stroke="#d2c5b5" stroke-width="0.45" opacity="1"/>
<path d="M816.5 345.5 C819.3 349.8 823.9 352.5 828.3 351.1 C832.5 349.8 832.6 344.0 832.0 340.4 C830.4 337.2 826.9 332.7 822.7 334.0 C818.3 335.4 816.2 340.4 816.5 345.5Z" fill="#f7f3ec" stroke="#d2c5b5" stroke-width="0.45" opacity="1"/>
<path d="M816.2 347.0 C813.8 351.9 813.8 357.6 817.3 360.5 C820.7 363.3 825.9 360.0 828.8 357.4 C830.8 354.1 833.0 348.4 829.6 345.6 C826.1 342.7 820.6 343.7 816.2 347.0Z" fill="#f3eee5" stroke="#d2c5b5" stroke-width="0.45" opacity="1"/>
<path d="M814.5 347.5 C809.1 347.1 803.8 349.4 802.2 354.1 C800.6 358.6 805.2 362.5 808.6 364.3 C812.3 365.0 818.3 364.9 819.9 360.3 C821.6 355.6 818.9 350.5 814.5 347.5Z" fill="#eae3d7" stroke="#d2c5b5" stroke-width="0.45" opacity="1"/>
<path d="M813.5 346.4 C810.9 342.1 806.2 339.2 801.4 340.4 C796.8 341.5 796.0 347.2 796.3 350.7 C797.7 353.9 801.0 358.5 805.6 357.4 C810.5 356.2 813.3 351.4 813.5 346.4Z" fill="#f7f3ec" stroke="#d2c5b5" stroke-width="0.45" opacity="1"/>
<path d="M813.9 344.9 C816.9 340.1 817.3 334.1 813.8 330.5 C810.5 327.0 804.7 329.6 801.4 331.9 C799.0 335.1 796.2 340.8 799.5 344.3 C803.0 347.9 809.0 347.6 813.9 344.9Z" fill="#f3eee5" stroke="#d2c5b5" stroke-width="0.45" opacity="1"/>
<path d="M815.5 344.5 C820.5 344.7 825.5 342.3 826.9 337.8 C828.3 333.4 823.8 329.9 820.5 328.3 C816.9 327.8 811.2 328.1 809.9 332.5 C808.5 337.0 811.2 341.8 815.5 344.5Z" fill="#eae3d7" stroke="#d2c5b5" stroke-width="0.45" opacity="1"/>
</g>
<g transform="translate(739.0 317.0) rotate(0) scale(1 0.98) translate(-739.0 -317.0)">
<circle cx="739.0" cy="317.0" r="38.6" fill="#ede7dc"/>
<path d="M742.2 301.7 C750.8 300.9 758.9 295.3 760.8 286.4 C762.6 277.9 754.5 272.3 748.8 270.1 C742.6 269.8 733.0 271.7 731.2 280.3 C729.4 289.1 734.6 297.5 742.2 301.7Z" fill="#f5f1e9" stroke="#d0c6b8" stroke-width="0.45" opacity="1"/>
<path d="M751.4 307.5 C758.4 312.6 767.8 313.9 774.6 308.7 C781.2 303.7 778.6 294.3 775.7 289.0 C771.3 284.7 762.9 279.8 756.4 284.8 C749.6 290.0 748.3 299.4 751.4 307.5Z" fill="#ede7dc" stroke="#d0c6b8" stroke-width="0.45" opacity="1"/>
<path d="M754.5 319.0 C756.0 326.4 761.7 333.0 769.9 334.0 C777.8 335.0 782.3 327.7 783.8 322.7 C783.6 317.4 781.0 309.2 773.1 308.2 C764.9 307.2 757.8 312.2 754.5 319.0Z" fill="#f9f6f0" stroke="#d0c6b8" stroke-width="0.45" opacity="1"/>
<path d="M751.1 326.9 C748.0 334.8 749.4 344.5 756.5 350.3 C763.4 355.9 772.0 351.5 776.5 347.6 C779.4 342.4 782.0 333.1 775.1 327.5 C768.0 321.7 758.3 322.3 751.1 326.9Z" fill="#f5f1e9" stroke="#d0c6b8" stroke-width="0.45" opacity="1"/>
<path d="M741.9 332.4 C734.3 336.5 728.9 344.8 730.6 353.7 C732.3 362.3 741.9 364.4 748.1 364.2 C753.8 362.1 762.0 356.6 760.3 348.0 C758.6 339.1 750.6 333.3 741.9 332.4Z" fill="#ede7dc" stroke="#d0c6b8" stroke-width="0.45" opacity="1"/>
<path d="M729.7 329.6 C722.1 327.0 713.0 328.6 708.0 335.5 C703.2 342.1 707.8 350.0 711.8 354.0 C716.9 356.6 725.8 358.7 730.7 352.1 C735.7 345.3 734.5 336.1 729.7 329.6Z" fill="#f9f6f0" stroke="#d0c6b8" stroke-width="0.45" opacity="1"/>
<path d="M724.4 322.6 C719.3 315.7 710.9 311.6 703.4 314.5 C696.1 317.3 696.1 327.0 697.5 333.0 C700.5 338.3 707.0 345.5 714.2 342.7 C721.8 339.8 725.2 331.2 724.4 322.6Z" fill="#f5f1e9" stroke="#d0c6b8" stroke-width="0.45" opacity="1"/>
<path d="M725.0 310.1 C726.4 301.6 723.2 292.5 715.4 288.7 C707.9 285.0 700.6 291.4 697.1 296.4 C695.3 302.2 694.6 311.9 702.2 315.6 C710.0 319.5 719.1 316.4 725.0 310.1Z" fill="#ede7dc" stroke="#d0c6b8" stroke-width="0.45" opacity="1"/>
<path d="M731.9 303.0 C738.0 297.1 740.7 287.7 736.6 279.5 C732.6 271.7 722.9 272.2 717.2 274.0 C712.4 277.5 706.3 285.0 710.2 292.8 C714.4 301.0 723.5 304.4 731.9 303.0Z" fill="#f9f6f0" stroke="#d0c6b8" stroke-width="0.45" opacity="1"/>
<path d="M741.2 324.0 C735.4 328.2 731.9 335.6 734.2 342.9 C736.4 350.0 744.5 350.9 749.5 350.2 C753.9 347.9 760.1 342.5 757.8 335.4 C755.5 328.1 748.4 324.1 741.2 324.0Z" fill="#ede7dc" stroke="#d0c6b8" stroke-width="0.45" opacity="1"/>
<path d="M735.1 323.2 C727.9 321.3 719.9 323.3 715.8 329.8 C711.9 336.0 716.6 342.9 720.6 346.3 C725.3 348.4 733.6 349.7 737.5 343.4 C741.6 337.0 739.9 328.8 735.1 323.2Z" fill="#f9f6f0" stroke="#d0c6b8" stroke-width="0.45" opacity="1"/>
<path d="M732.0 319.4 C727.5 313.6 719.4 310.4 711.5 313.1 C703.9 315.8 703.0 324.2 703.8 329.2 C706.3 333.7 712.2 339.7 719.9 337.1 C727.7 334.3 732.1 326.8 732.0 319.4Z" fill="#f5f1e9" stroke="#d0c6b8" stroke-width="0.45" opacity="1"/>
<path d="M732.7 313.3 C734.6 305.5 732.3 296.9 725.4 292.9 C718.8 289.0 711.6 294.4 708.0 298.8 C705.9 304.1 704.7 313.0 711.3 316.9 C718.2 321.0 726.8 318.7 732.7 313.3Z" fill="#ede7dc" stroke="#d0c6b8" stroke-width="0.45" opacity="1"/>
<path d="M737.1 309.9 C743.4 305.7 747.3 297.8 745.1 289.8 C743.0 282.0 734.5 280.5 729.3 281.0 C724.5 283.3 717.9 288.8 720.0 296.6 C722.2 304.6 729.5 309.5 737.1 309.9Z" fill="#f9f6f0" stroke="#d0c6b8" stroke-width="0.45" opacity="1"/>
<path d="M742.8 310.7 C749.6 312.2 757.4 309.7 761.6 302.9 C765.5 296.4 761.2 289.7 757.6 286.5 C753.1 284.8 745.2 284.0 741.3 290.5 C737.1 297.3 738.4 305.4 742.8 310.7Z" fill="#f5f1e9" stroke="#d0c6b8" stroke-width="0.45" opacity="1"/>
<path d="M746.1 315.1 C749.9 320.9 757.0 324.5 764.3 322.6 C771.3 320.7 772.6 313.0 772.2 308.2 C770.2 303.8 765.2 297.8 758.2 299.6 C750.9 301.6 746.5 308.3 746.1 315.1Z" fill="#ede7dc" stroke="#d0c6b8" stroke-width="0.45" opacity="1"/>
<path d="M745.0 321.2 C742.7 328.3 744.2 336.5 750.3 340.8 C756.3 345.0 763.4 340.5 767.0 336.7 C769.4 332.0 771.2 323.8 765.2 319.6 C759.1 315.3 750.9 316.7 745.0 321.2Z" fill="#f9f6f0" stroke="#d0c6b8" stroke-width="0.45" opacity="1"/>
<path d="M738.7 315.2 C744.6 312.8 749.0 307.8 748.2 302.4 C747.5 297.1 740.5 295.8 736.0 295.8 C731.6 297.0 725.3 300.3 726.1 305.5 C726.8 311.0 732.4 314.5 738.7 315.2Z" fill="#f9f6f0" stroke="#d0c6b8" stroke-width="0.45" opacity="1"/>
<path d="M740.4 315.9 C745.3 319.3 751.8 320.2 756.4 316.5 C760.8 313.1 758.9 306.6 756.8 303.0 C753.8 300.1 748.0 296.8 743.5 300.2 C739.0 303.8 738.2 310.3 740.4 315.9Z" fill="#f5f1e9" stroke="#d0c6b8" stroke-width="0.45" opacity="1"/>
<path d="M740.7 317.7 C739.9 323.7 742.1 329.8 747.1 331.8 C752.0 333.8 756.5 328.7 758.6 324.9 C759.7 320.7 759.9 313.9 755.1 311.9 C750.1 309.9 744.3 312.8 740.7 317.7Z" fill="#ede7dc" stroke="#d0c6b8" stroke-width="0.45" opacity="1"/>
<path d="M739.2 318.8 C733.1 321.0 728.5 325.8 729.0 331.4 C729.5 336.8 736.4 338.6 741.0 338.8 C745.4 337.8 751.9 334.8 751.4 329.4 C750.9 323.8 745.5 319.9 739.2 318.8Z" fill="#f9f6f0" stroke="#d0c6b8" stroke-width="0.45" opacity="1"/>
<path d="M737.5 318.1 C732.6 314.1 725.9 312.7 721.1 316.2 C716.4 319.5 718.2 326.3 720.2 330.3 C723.3 333.6 729.2 337.5 733.8 334.2 C738.7 330.7 739.6 324.0 737.5 318.1Z" fill="#f5f1e9" stroke="#d0c6b8" stroke-width="0.45" opacity="1"/>
<path d="M737.3 316.3 C738.2 310.0 736.1 303.7 730.9 301.5 C725.9 299.4 721.1 304.7 718.8 308.6 C717.6 312.9 717.3 320.0 722.3 322.1 C727.4 324.3 733.5 321.3 737.3 316.3Z" fill="#ede7dc" stroke="#d0c6b8" stroke-width="0.45" opacity="1"/>
</g>
<ellipse cx="738.0" cy="320.0" rx="12.9" ry="9.2" fill="none" stroke="#4a4545" stroke-width="2" stroke-dasharray="0.8 0.9"/>
<ellipse cx="738.0" cy="320.0" rx="10.6" ry="6.9" fill="#353132"/>
<ellipse cx="739.8" cy="327.8" rx="8.7" ry="4.1" fill="#f9f6f0" stroke="#d0c6b8" stroke-width=".4"/>
<g transform="translate(825.0 419.5) rotate(-10) scale(1 0.9) translate(-825.0 -419.5)">
<circle cx="825.0" cy="419.5" r="31.9" fill="#efd0b3"/>
<path d="M820.3 407.5 C825.4 403.3 828.2 396.1 825.6 389.4 C823.1 382.9 815.5 382.6 811.0 383.5 C807.0 385.9 801.7 391.3 804.2 397.7 C806.8 404.4 813.7 407.8 820.3 407.5Z" fill="#f3dcc4" stroke="#deb490" stroke-width="0.45" opacity="1"/>
<path d="M829.7 407.5 C836.8 408.0 844.1 404.7 846.8 397.8 C849.4 391.2 843.7 385.6 839.4 383.0 C834.6 382.0 826.5 382.2 823.9 388.8 C821.2 395.6 824.2 403.0 829.7 407.5Z" fill="#efd0b3" stroke="#deb490" stroke-width="0.45" opacity="1"/>
<path d="M835.9 412.6 C841.0 416.9 848.4 418.4 854.2 414.7 C859.9 411.1 858.6 403.6 856.8 399.3 C853.6 395.8 847.4 391.5 841.8 395.1 C835.9 398.8 834.1 406.1 835.9 412.6Z" fill="#f7e7d5" stroke="#deb490" stroke-width="0.45" opacity="1"/>
<path d="M837.9 420.3 C839.7 426.4 845.2 431.6 852.7 432.0 C860.0 432.5 863.6 426.2 864.7 422.0 C864.1 417.6 861.3 411.0 854.1 410.5 C846.6 410.1 840.4 414.5 837.9 420.3Z" fill="#f3dcc4" stroke="#deb490" stroke-width="0.45" opacity="1"/>
<path d="M836.4 425.6 C835.4 431.7 838.1 438.6 844.4 441.9 C850.4 445.1 856.1 440.9 858.8 437.5 C860.1 433.4 860.4 426.4 854.4 423.1 C848.1 419.8 840.9 421.4 836.4 425.6Z" fill="#efd0b3" stroke="#deb490" stroke-width="0.45" opacity="1"/>
<path d="M830.3 431.3 C825.1 435.7 822.5 442.7 825.2 448.9 C827.9 454.8 835.6 454.5 840.2 453.2 C844.2 450.6 849.5 445.0 846.8 439.1 C844.1 433.0 837.0 430.4 830.3 431.3Z" fill="#f7e7d5" stroke="#deb490" stroke-width="0.45" opacity="1"/>
<path d="M820.7 431.7 C814.4 431.8 807.8 435.8 805.3 442.9 C802.9 449.8 808.0 455.0 811.8 457.2 C816.1 457.8 823.3 456.9 825.7 450.1 C828.2 442.9 825.6 435.7 820.7 431.7Z" fill="#f3dcc4" stroke="#deb490" stroke-width="0.45" opacity="1"/>
<path d="M814.5 427.0 C809.3 423.4 801.8 422.8 795.9 427.1 C790.1 431.2 791.3 438.3 793.2 442.2 C796.4 445.3 802.7 448.7 808.4 444.6 C814.4 440.4 816.2 433.1 814.5 427.0Z" fill="#efd0b3" stroke="#deb490" stroke-width="0.45" opacity="1"/>
<path d="M812.1 418.9 C810.2 412.8 804.4 407.6 796.8 407.2 C789.5 406.8 785.9 413.2 784.9 417.6 C785.5 422.0 788.4 428.7 795.8 429.1 C803.4 429.4 809.6 424.8 812.1 418.9Z" fill="#f7e7d5" stroke="#deb490" stroke-width="0.45" opacity="1"/>
<path d="M815.1 411.2 C817.5 405.1 816.6 397.6 811.2 393.1 C805.9 388.7 799.2 392.1 795.7 395.1 C793.3 399.2 791.2 406.4 796.5 410.7 C801.9 415.2 809.5 414.8 815.1 411.2Z" fill="#f3dcc4" stroke="#deb490" stroke-width="0.45" opacity="1"/>
<path d="M831.1 419.6 C832.8 425.5 837.6 430.3 843.8 430.4 C849.8 430.6 852.5 424.2 853.3 420.0 C852.7 415.7 850.1 409.3 844.1 409.2 C837.9 409.1 833.0 413.8 831.1 419.6Z" fill="#efd0b3" stroke="#deb490" stroke-width="0.45" opacity="1"/>
<path d="M829.5 423.5 C827.2 428.9 827.9 435.7 832.7 439.9 C837.3 444.0 843.4 441.2 846.6 438.7 C848.8 435.2 850.8 428.8 846.2 424.7 C841.4 420.5 834.6 420.6 829.5 423.5Z" fill="#f7e7d5" stroke="#deb490" stroke-width="0.45" opacity="1"/>
<path d="M825.7 425.5 C820.5 428.0 816.7 433.8 817.4 440.5 C818.1 446.9 824.3 449.2 828.2 449.5 C832.1 448.3 837.6 444.8 836.9 438.4 C836.2 431.7 831.2 426.9 825.7 425.5Z" fill="#f3dcc4" stroke="#deb490" stroke-width="0.45" opacity="1"/>
<path d="M820.9 424.0 C815.7 421.8 809.0 422.6 804.6 427.4 C800.5 432.0 803.0 438.0 805.4 441.2 C808.8 443.3 815.0 445.2 819.2 440.5 C823.6 435.7 823.7 429.0 820.9 424.0Z" fill="#efd0b3" stroke="#deb490" stroke-width="0.45" opacity="1"/>
<path d="M819.0 420.1 C816.4 414.4 810.7 410.2 804.1 410.9 C797.8 411.5 795.6 418.3 795.4 422.6 C796.5 426.8 800.0 433.0 806.4 432.3 C813.0 431.6 817.7 426.2 819.0 420.1Z" fill="#f7e7d5" stroke="#deb490" stroke-width="0.45" opacity="1"/>
<path d="M820.0 416.0 C822.0 409.8 820.5 402.4 814.8 398.4 C809.3 394.5 802.9 398.3 799.7 401.6 C797.7 405.7 796.2 413.0 801.7 416.9 C807.4 420.9 814.8 419.9 820.0 416.0Z" fill="#f3dcc4" stroke="#deb490" stroke-width="0.45" opacity="1"/>
<path d="M825.3 413.4 C831.1 412.0 835.9 407.4 836.3 401.2 C836.6 395.3 830.5 392.3 826.4 391.4 C822.3 391.9 816.0 394.2 815.7 400.1 C815.4 406.3 819.7 411.4 825.3 413.4Z" fill="#efd0b3" stroke="#deb490" stroke-width="0.45" opacity="1"/>
<path d="M828.5 414.5 C834.2 416.2 841.1 414.4 845.0 408.9 C848.7 403.5 845.3 397.6 842.4 394.6 C838.6 392.9 831.8 391.7 828.1 397.1 C824.2 402.7 824.9 409.7 828.5 414.5Z" fill="#f7e7d5" stroke="#deb490" stroke-width="0.45" opacity="1"/>
<path d="M826.1 420.6 C823.2 425.3 822.8 431.2 826.2 434.7 C829.5 438.0 835.2 435.4 838.3 433.1 C840.7 430.0 843.4 424.4 840.1 421.0 C836.7 417.5 830.9 417.8 826.1 420.6Z" fill="#f7e7d5" stroke="#deb490" stroke-width="0.45" opacity="1"/>
<path d="M824.7 421.0 C819.1 421.0 813.9 423.3 812.9 427.6 C811.9 431.7 817.3 434.9 821.0 436.3 C825.0 436.7 831.2 436.3 832.2 432.1 C833.2 427.8 829.7 423.5 824.7 421.0Z" fill="#f3dcc4" stroke="#deb490" stroke-width="0.45" opacity="1"/>
<path d="M823.5 419.8 C821.2 415.5 816.7 412.6 812.0 413.6 C807.6 414.6 806.7 420.0 806.9 423.5 C808.1 426.7 811.2 431.3 815.7 430.3 C820.4 429.3 823.2 424.7 823.5 419.8Z" fill="#efd0b3" stroke="#deb490" stroke-width="0.45" opacity="1"/>
<path d="M823.8 418.5 C826.1 413.8 825.9 408.3 822.2 405.2 C818.7 402.2 813.7 405.1 810.9 407.5 C808.9 410.6 807.0 416.1 810.4 419.0 C814.1 422.1 819.6 421.4 823.8 418.5Z" fill="#f7e7d5" stroke="#deb490" stroke-width="0.45" opacity="1"/>
<path d="M825.3 418.0 C830.6 417.6 835.5 414.6 836.4 409.7 C837.3 405.1 832.1 401.9 828.5 400.7 C824.7 400.6 818.8 401.6 817.9 406.2 C817.0 411.1 820.4 415.7 825.3 418.0Z" fill="#f3dcc4" stroke="#deb490" stroke-width="0.45" opacity="1"/>
<path d="M826.5 419.3 C828.6 424.4 832.7 428.2 837.0 427.5 C841.1 426.8 842.0 420.7 841.9 416.8 C840.8 413.0 838.0 407.5 833.9 408.2 C829.6 408.8 826.9 413.7 826.5 419.3Z" fill="#efd0b3" stroke="#deb490" stroke-width="0.45" opacity="1"/>
</g>
<g transform="translate(714.0 407.0) rotate(10) scale(1 0.93) translate(-714.0 -407.0)">
<circle cx="714.0" cy="407.0" r="42.8" fill="#ece6db"/>
<path d="M729.2 415.4 C727.5 424.0 730.8 433.5 739.2 438.2 C747.2 442.6 755.2 436.7 759.0 432.0 C761.0 426.2 761.8 416.4 753.7 411.9 C745.4 407.3 735.6 409.5 729.2 415.4Z" fill="#f5f1e9" stroke="#cfc5b8" stroke-width="0.45" opacity="1"/>
<path d="M721.4 422.7 C715.3 428.8 712.7 438.9 717.0 448.1 C721.2 457.0 731.1 457.1 736.9 455.6 C741.8 452.1 748.0 444.3 743.8 435.4 C739.5 426.2 730.0 421.8 721.4 422.7Z" fill="#ece6db" stroke="#cfc5b8" stroke-width="0.45" opacity="1"/>
<path d="M711.3 424.1 C702.9 425.6 695.2 432.1 693.7 441.6 C692.3 450.8 700.4 456.3 706.1 458.2 C712.1 458.1 721.4 455.3 722.9 446.1 C724.3 436.6 718.9 428.1 711.3 424.1Z" fill="#f9f6f0" stroke="#cfc5b8" stroke-width="0.45" opacity="1"/>
<path d="M701.0 418.5 C693.9 414.4 684.2 414.3 677.4 420.4 C670.8 426.2 673.5 435.2 676.5 440.1 C681.0 443.7 689.6 447.5 696.2 441.7 C703.1 435.6 704.2 426.1 701.0 418.5Z" fill="#f5f1e9" stroke="#cfc5b8" stroke-width="0.45" opacity="1"/>
<path d="M696.7 407.1 C694.0 398.9 686.6 392.2 677.2 392.2 C668.2 392.2 664.2 401.2 663.2 407.2 C664.3 413.1 668.3 422.1 677.3 422.0 C686.7 422.0 694.0 415.3 696.7 407.1Z" fill="#ece6db" stroke="#cfc5b8" stroke-width="0.45" opacity="1"/>
<path d="M702.3 394.2 C706.8 386.5 707.0 376.4 700.7 369.5 C694.6 362.9 685.1 366.2 679.9 369.6 C676.0 374.5 671.8 383.7 677.9 390.3 C684.2 397.2 694.2 398.0 702.3 394.2Z" fill="#f9f6f0" stroke="#cfc5b8" stroke-width="0.45" opacity="1"/>
<path d="M710.8 390.0 C718.0 385.9 722.9 377.5 721.2 368.2 C719.5 359.3 710.4 356.9 704.7 356.9 C699.3 358.9 691.7 364.5 693.4 373.4 C695.1 382.6 702.7 388.7 710.8 390.0Z" fill="#f5f1e9" stroke="#cfc5b8" stroke-width="0.45" opacity="1"/>
<path d="M722.8 392.1 C731.7 394.3 741.5 392.0 746.1 384.2 C750.5 376.8 744.1 368.6 739.0 364.5 C733.0 362.1 722.7 360.5 718.3 367.9 C713.8 375.6 716.5 385.4 722.8 392.1Z" fill="#ece6db" stroke="#cfc5b8" stroke-width="0.45" opacity="1"/>
<path d="M730.7 402.4 C735.5 409.9 744.3 414.7 753.1 412.2 C761.7 409.9 763.1 400.0 762.4 393.8 C759.8 388.1 753.6 380.2 745.0 382.6 C736.2 385.0 731.0 393.6 730.7 402.4Z" fill="#f9f6f0" stroke="#cfc5b8" stroke-width="0.45" opacity="1"/>
<path d="M721.1 403.0 C727.2 408.6 736.6 410.7 744.6 406.3 C752.4 402.0 751.6 392.6 749.7 387.2 C746.1 382.7 738.5 377.1 730.8 381.4 C722.8 385.8 719.6 394.9 721.1 403.0Z" fill="#ece6db" stroke="#cfc5b8" stroke-width="0.45" opacity="1"/>
<path d="M721.6 410.0 C721.2 418.2 725.6 426.7 734.1 430.1 C742.4 433.3 749.1 426.9 752.1 421.9 C753.3 416.3 752.7 407.0 744.5 403.7 C735.9 400.4 726.9 403.7 721.6 410.0Z" fill="#f9f6f0" stroke="#cfc5b8" stroke-width="0.45" opacity="1"/>
<path d="M717.2 414.5 C710.4 420.3 706.7 429.6 710.3 437.8 C713.7 445.8 723.9 445.6 730.0 444.0 C735.4 440.6 742.5 433.3 739.0 425.4 C735.5 417.1 726.2 413.4 717.2 414.5Z" fill="#f5f1e9" stroke="#cfc5b8" stroke-width="0.45" opacity="1"/>
<path d="M711.3 414.7 C702.7 414.5 693.9 419.0 690.9 427.7 C688.0 436.1 695.2 442.7 700.5 445.6 C706.5 446.7 716.2 445.9 719.2 437.6 C722.2 428.9 718.2 419.9 711.3 414.7Z" fill="#ece6db" stroke="#cfc5b8" stroke-width="0.45" opacity="1"/>
<path d="M706.4 410.0 C701.3 403.7 692.6 400.4 684.6 403.6 C676.8 406.6 676.5 415.8 677.7 421.4 C680.6 426.3 687.2 432.7 694.9 429.7 C703.0 426.5 707.0 418.1 706.4 410.0Z" fill="#f9f6f0" stroke="#cfc5b8" stroke-width="0.45" opacity="1"/>
<path d="M706.1 404.9 C705.8 397.2 701.0 389.7 693.0 387.5 C685.3 385.4 679.8 392.2 677.5 397.1 C677.0 402.4 678.3 411.1 686.0 413.2 C694.0 415.4 701.9 411.3 706.1 404.9Z" fill="#f5f1e9" stroke="#cfc5b8" stroke-width="0.45" opacity="1"/>
<path d="M711.2 399.3 C717.4 394.5 720.8 386.2 717.9 378.2 C715.1 370.6 706.2 370.0 700.8 371.0 C696.0 373.7 689.6 379.9 692.4 387.6 C695.3 395.5 703.4 399.6 711.2 399.3Z" fill="#ece6db" stroke="#cfc5b8" stroke-width="0.45" opacity="1"/>
<path d="M716.2 399.1 C725.1 398.9 733.7 393.8 736.1 385.0 C738.5 376.4 730.7 370.2 725.1 367.5 C718.9 366.8 708.9 368.1 706.5 376.7 C704.1 385.5 708.8 394.3 716.2 399.1Z" fill="#f9f6f0" stroke="#cfc5b8" stroke-width="0.45" opacity="1"/>
<path d="M712.9 405.3 C717.6 400.4 719.7 393.5 716.5 388.4 C713.5 383.5 706.1 385.1 701.7 387.0 C698.0 390.1 693.2 396.0 696.3 400.9 C699.4 406.0 706.5 407.2 712.9 405.3Z" fill="#f9f6f0" stroke="#cfc5b8" stroke-width="0.45" opacity="1"/>
<path d="M715.0 405.2 C721.7 407.2 728.8 406.1 731.8 401.0 C734.8 396.1 729.8 390.1 725.9 387.1 C721.3 385.1 713.7 383.5 710.8 388.4 C707.8 393.5 710.1 400.3 715.0 405.2Z" fill="#f5f1e9" stroke="#cfc5b8" stroke-width="0.45" opacity="1"/>
<path d="M716.0 406.9 C718.2 414.2 723.6 420.1 730.2 419.9 C736.6 419.7 739.2 411.5 739.7 406.1 C738.8 400.8 735.7 392.9 729.3 393.1 C722.7 393.3 717.7 399.5 716.0 406.9Z" fill="#ece6db" stroke="#cfc5b8" stroke-width="0.45" opacity="1"/>
<path d="M715.0 408.8 C709.3 413.8 706.1 420.8 708.9 426.0 C711.7 431.2 720.0 429.7 725.0 427.7 C729.4 424.6 735.3 418.6 732.6 413.5 C729.8 408.2 722.3 406.9 715.0 408.8Z" fill="#f9f6f0" stroke="#cfc5b8" stroke-width="0.45" opacity="1"/>
<path d="M713.0 408.8 C706.8 407.3 700.0 409.1 697.1 414.4 C694.3 419.6 698.9 425.1 702.6 427.9 C706.8 429.5 714.0 430.4 716.8 425.3 C719.8 419.9 717.6 413.3 713.0 408.8Z" fill="#f5f1e9" stroke="#cfc5b8" stroke-width="0.45" opacity="1"/>
<path d="M712.0 407.0 C710.2 400.2 705.3 394.7 699.1 394.7 C693.1 394.7 690.5 402.2 689.8 407.1 C690.5 412.1 693.2 419.5 699.2 419.4 C705.4 419.4 710.2 413.8 712.0 407.0Z" fill="#ece6db" stroke="#cfc5b8" stroke-width="0.45" opacity="1"/>
</g>
<ellipse cx="715.0" cy="416.0" rx="14.3" ry="10.2" fill="none" stroke="#4a4545" stroke-width="2" stroke-dasharray="0.8 0.9"/>
<ellipse cx="715.0" cy="416.0" rx="11.7" ry="7.6" fill="#353132"/>
<ellipse cx="717.0" cy="424.7" rx="9.7" ry="4.6" fill="#f9f6f0" stroke="#cfc5b8" stroke-width=".4"/>
<g style="font-family:'Liberation Serif','DejaVu Serif',serif" text-anchor="middle" fill="#2e2b31" font-weight="bold">
<text id="tv" x="757" y="644" font-style="italic" font-weight="normal" fill="#4d4750" textLength="247" lengthAdjust="spacingAndGlyphs"><tspan font-size="70">T</tspan><tspan font-size="55">ervetuloa</tspan></text>
<text id="yl" x="755" y="681" font-size="20.5" letter-spacing="4.1" fill="#38353b" textLength="253" lengthAdjust="spacing">YLIOPPILASJUHLIIN</text>
<text x="756" y="721.800" font-size="15" textLength="59" lengthAdjust="spacing">TOUKO</text>
<text x="619" y="758.3" font-size="17" letter-spacing="1.4" textLength="91" lengthAdjust="spacing">LAUANTAI</text>
<text x="755.800" y="762.300" font-size="32" font-weight="normal" fill="#b98f77" stroke="#b98f77" stroke-width=".45" letter-spacing="1" textLength="37.5" lengthAdjust="spacingAndGlyphs">30</text>
<text x="893" y="758.3" font-size="17" letter-spacing="1.2" textLength="117" lengthAdjust="spacing">KLO. 14-19.30</text>
<text x="756" y="792.300" font-size="15" letter-spacing="1.2" textLength="40" lengthAdjust="spacingAndGlyphs">2026</text>
<text x="755" y="841.2" font-size="21.500" letter-spacing="1.5" textLength="125" lengthAdjust="spacing">osoitteessa:</text>
<text x="755" y="863.5" font-size="21" letter-spacing="1.5" textLength="335" lengthAdjust="spacing">Ylioppilaankatu 1, 00100 Espoo</text>
<text id="nn" x="755" y="929" font-size="35" font-style="italic" font-weight="normal" fill="#525056" textLength="218" lengthAdjust="spacing">Nimi &amp; Nimi</text>
<text x="755" y="978.5" font-size="15.5" letter-spacing="1.5" textLength="56" lengthAdjust="spacing">R.S.V.P</text>
<text x="755" y="996" font-size="16" letter-spacing="1.4" textLength="278" lengthAdjust="spacing">viim. 25.5.2026 Ilmoitathan myös</text>
<text x="754" y="1013.6" font-size="16" letter-spacing="1.4" textLength="259" lengthAdjust="spacing">mahdolliset ruokaaineallergiat</text>
<text x="755" y="1031" font-size="16" letter-spacing="1.4" textLength="301" lengthAdjust="spacing" xml:space="preserve">puh. 045 200 XXX tai  044 200 XXXX</text>
<text x="754" y="1076" font-size="20" font-style="italic" font-weight="normal" fill="#d9b892">ds</text>
</g>
<g stroke="#67636a" stroke-width="1.25" fill="none">
<path d="M555 724.8 H690.5 M819.4 724.8 H954.4 M555 780.7 H718.4 M790 780.7 H954.4 M690 734.6 V774 M819.4 734.6 V774"/>
</g>
<path d="M744 1080.500 H765" stroke="#dcc3a4" stroke-width="0.8"/>
</svg>
</div>
<div id="work"></div>
<svg id="rul" style="left:0;top:0" width="1445" height="1182" viewBox="0 0 1445 1182" pointer-events="none">
<defs><filter id="csh" x="-20%" y="-10%" width="140%" height="120%"><feGaussianBlur stdDeviation="12"/></filter><linearGradient id="vfade" x1="0" y1="0" x2="1" y2="0"><stop offset="0" stop-color="#f7f7f8"/><stop offset="1" stop-color="#eeeef4"/></linearGradient></defs>
<rect x="506" y="206" width="501" height="894" fill="#000" opacity=".13" filter="url(#csh)"/>
<rect x="465" y="160" width="37.500" height="38" fill="#d3d7df"/>
<rect x="502.5" y="160" width="504.5" height="38" fill="#f5f5f8"/>
<rect x="465" y="198" width="37.500" height="896" fill="url(#vfade)"/>
<path d="M504.10 160.0 V197.500 M513.41 190.0 V197.500 M522.73 190.0 V197.500 M532.04 190.0 V197.500 M541.36 190.0 V197.500 M550.67 184.5 V197.500 M559.98 190.0 V197.500 M569.30 190.0 V197.500 M578.61 190.0 V197.500 M587.93 190.0 V197.500 M597.24 160.0 V197.500 M606.55 190.0 V197.500 M615.87 190.0 V197.500 M625.18 190.0 V197.500 M634.50 190.0 V197.500 M643.81 184.5 V197.500 M653.12 190.0 V197.500 M662.44 190.0 V197.500 M671.75 190.0 V197.500 M681.07 190.0 V197.500 M690.38 160.0 V197.500 M699.69 190.0 V197.500 M709.01 190.0 V197.500 M718.32 190.0 V197.500 M727.64 190.0 V197.500 M736.95 184.5 V197.500 M746.26 190.0 V197.500 M755.58 190.0 V197.500 M764.89 190.0 V197.500 M774.21 190.0 V197.500 M783.52 160.0 V197.500 M792.83 190.0 V197.500 M802.15 190.0 V197.500 M811.46 190.0 V197.500 M820.78 190.0 V197.500 M830.09 184.5 V197.500 M839.40 190.0 V197.500 M848.72 190.0 V197.500 M858.03 190.0 V197.500 M867.35 190.0 V197.500 M876.66 160.0 V197.500 M885.97 190.0 V197.500 M895.29 190.0 V197.500 M904.60 190.0 V197.500 M913.92 190.0 V197.500 M923.23 184.5 V197.500 M932.54 190.0 V197.500 M941.86 190.0 V197.500 M951.17 190.0 V197.500 M960.49 190.0 V197.500 M969.80 160.0 V197.500 M979.11 190.0 V197.500 M988.43 190.0 V197.500 M997.74 190.0 V197.500 M1007.06 190.0 V197.500" stroke="#a7acb7" stroke-width="1" fill="none"/>
<path d="M502 197.500 H1007" stroke="#a7acb7" stroke-width="1.200"/>
<path d="M495.5 207.31 H502.500 M495.5 216.63 H502.500 M495.5 225.94 H502.500 M495.5 235.26 H502.500 M490.5 244.57 H502.500 M495.5 253.88 H502.500 M495.5 263.20 H502.500 M495.5 272.51 H502.500 M495.5 281.83 H502.500 M465.0 291.14 H502.500 M495.5 300.45 H502.500 M495.5 309.77 H502.500 M495.5 319.08 H502.500 M495.5 328.40 H502.500 M490.5 337.71 H502.500 M495.5 347.02 H502.500 M495.5 356.34 H502.500 M495.5 365.65 H502.500 M495.5 374.97 H502.500 M465.0 384.28 H502.500 M495.5 393.59 H502.500 M495.5 402.91 H502.500 M495.5 412.22 H502.500 M495.5 421.54 H502.500 M490.5 430.85 H502.500 M495.5 440.16 H502.500 M495.5 449.48 H502.500 M495.5 458.79 H502.500 M495.5 468.11 H502.500 M465.0 477.42 H502.500 M495.5 486.73 H502.500 M495.5 496.05 H502.500 M495.5 505.36 H502.500 M495.5 514.68 H502.500 M490.5 523.99 H502.500 M495.5 533.30 H502.500 M495.5 542.62 H502.500 M495.5 551.93 H502.500 M495.5 561.25 H502.500 M465.0 570.56 H502.500 M495.5 579.87 H502.500 M495.5 589.19 H502.500 M495.5 598.50 H502.500 M495.5 607.82 H502.500 M490.5 617.13 H502.500 M495.5 626.44 H502.500 M495.5 635.76 H502.500 M495.5 645.07 H502.500 M495.5 654.39 H502.500 M465.0 663.70 H502.500 M495.5 673.01 H502.500 M495.5 682.33 H502.500 M495.5 691.64 H502.500 M495.5 700.96 H502.500 M490.5 710.27 H502.500 M495.5 719.58 H502.500 M495.5 728.90 H502.500 M495.5 738.21 H502.500 M495.5 747.53 H502.500 M465.0 756.84 H502.500 M495.5 766.15 H502.500 M495.5 775.47 H502.500 M495.5 784.78 H502.500 M495.5 794.10 H502.500 M490.5 803.41 H502.500 M495.5 812.72 H502.500 M495.5 822.04 H502.500 M495.5 831.35 H502.500 M495.5 840.67 H502.500 M465.0 849.98 H502.500 M495.5 859.29 H502.500 M495.5 868.61 H502.500 M495.5 877.92 H502.500 M495.5 887.24 H502.500 M490.5 896.55 H502.500 M495.5 905.86 H502.500 M495.5 915.18 H502.500 M495.5 924.49 H502.500 M495.5 933.81 H502.500 M465.0 943.12 H502.500 M495.5 952.43 H502.500 M495.5 961.75 H502.500 M495.5 971.06 H502.500 M495.5 980.38 H502.500 M490.5 989.69 H502.500 M495.5 999.00 H502.500 M495.5 1008.32 H502.500 M495.5 1017.63 H502.500 M495.5 1026.95 H502.500 M465.0 1036.26 H502.500 M495.5 1045.57 H502.500 M495.5 1054.89 H502.500 M495.5 1064.20 H502.500 M495.5 1073.52 H502.500 M490.5 1082.83 H502.500 M495.5 1092.14 H502.500" stroke="#a7acb7" stroke-width="1" fill="none"/>
<g font-family="'Liberation Sans',sans-serif" font-size="14.500" fill="#585c64">
<text x="507.4" y="177.800">0</text>
<text x="600.5" y="177.800">200</text>
<text x="693.7" y="177.800">400</text>
<text x="786.8" y="177.800">600</text>
<text x="880.0" y="177.800">800</text>
<text x="973.1" y="177.800">1000</text>
<text transform="translate(469.800 202.9) rotate(90)">0</text>
<text transform="translate(469.800 296.0) rotate(90)">200</text>
<text transform="translate(469.800 389.2) rotate(90)">400</text>
<text transform="translate(469.800 482.3) rotate(90)">600</text>
<text transform="translate(469.800 575.5) rotate(90)">800</text>
<text transform="translate(469.800 668.6) rotate(90)">1000</text>
<text transform="translate(469.800 761.7) rotate(90)">1200</text>
<text transform="translate(469.800 854.9) rotate(90)">1400</text>
<text transform="translate(469.800 948.0) rotate(90)">1600</text>
<text transform="translate(469.800 1041.2) rotate(90)">1800</text>
</g>
</svg>
<svg id="inv" style="left:502px;top:198px" width="505" height="898" viewBox="502 198 505 898">
<defs>
<radialGradient id="bg1" cx="48%" cy="50%" r="62%"><stop offset="0" stop-color="#5a525a"/><stop offset=".45" stop-color="#3a3339"/><stop offset=".8" stop-color="#1c181d"/><stop offset="1" stop-color="#120f13"/></radialGradient>
<radialGradient id="bg2" cx="45%" cy="48%" r="62%"><stop offset="0" stop-color="#564e56"/><stop offset=".45" stop-color="#363036"/><stop offset=".8" stop-color="#1a171b"/><stop offset="1" stop-color="#100e11"/></radialGradient>
<radialGradient id="bg3" cx="42%" cy="45%" r="62%"><stop offset="0" stop-color="#5e565e"/><stop offset=".45" stop-color="#3c353b"/><stop offset=".8" stop-color="#1c181d"/><stop offset="1" stop-color="#120f13"/></radialGradient>
<filter id="blur4" x="-50%" y="-50%" width="200%" height="200%"><feGaussianBlur stdDeviation="5"/></filter>
<filter id="paper" x="0" y="0" width="100%" height="100%" color-interpolation-filters="sRGB"><feTurbulence type="fractalNoise" baseFrequency="0.06 0.17" numOctaves="4" seed="3" result="n"/><feColorMatrix in="n" type="matrix" values="0 0 0 0 0.995  0 0 0 0 0.985  0 0 0 0 0.965  0.95 0 0 0 -0.32"/></filter>
<filter id="paper2" x="0" y="0" width="100%" height="100%" color-interpolation-filters="sRGB"><feTurbulence type="fractalNoise" baseFrequency="0.07 0.19" numOctaves="4" seed="11" result="n"/><feColorMatrix in="n" type="matrix" values="0 0 0 0 0.885  0 0 0 0 0.852  0 0 0 0 0.80  0 0.9 0 0 -0.36"/></filter>
<clipPath id="cv"><rect x="502" y="198" width="505" height="898"/></clipPath>
</defs>
<rect x="502" y="198" width="505" height="898" fill="#f3efe7"/>
<g clip-path="url(#cv)"><g transform="rotate(-50 755 647)"><rect x="205" y="97" width="1100" height="1100" filter="url(#paper)"/><rect x="205" y="97" width="1100" height="1100" filter="url(#paper2)"/></g></g>
<g fill="none" stroke="#d6cbc3" stroke-linecap="round">
<path d="M659 405 C645 425 638 440 640 452 C643 478 660 495 690 503 C700 505 710 508 718 511" stroke-width="4" opacity=".55"/>
<path d="M668 452 C660 468 662 488 680 497 C697 503 712 494 728 482" stroke-width="1.8"/>
<path d="M651 440 C648 470 662 500 700 512" stroke-width="1.4" stroke="#c9bcb2"/>
</g>
<g fill="none" stroke="#9a98a4" stroke-width="0.6">
<path d="M729 452 L743 556"/>
<path d="M739 460 L741 558"/>
<path d="M748 462 L747 556"/>
<path d="M756 462 L752 556"/>
<path d="M768 455 L757 556"/>
<path d="M777 450 L752 558"/>
<path d="M733 455 L756 540"/>
<path d="M760 470 L740 545"/>
</g>
<g transform="translate(620 420) scale(0.19376)"><path d="M672 850 L568 850 Q600 800 610 775 C540 760 480 700 492 620 C500 560 540 520 548 480 C520 480 490 460 495 430 C500 400 560 395 580 430 C592 455 585 480 585 500 C580 560 545 620 555 660 C565 700 620 715 672 715 C724 715 779 700 789 660 C799 620 764 560 759 500 C759 480 752 455 764 430 C784 395 844 400 849 430 C854 460 824 480 796 480 C804 520 844 560 852 620 C864 700 804 760 734 775 Q744 800 776 850 Z" fill="#e5dccb"/><path d="M585 483 H760" stroke="#dccfba" stroke-width="6" fill="none"/></g>
<path d="M648.0 271.0 Q636.3 244.9 630.0 217.0" fill="none" stroke="#8b8189" stroke-width="0.9" opacity="0.9"/>
<path d="M644.1 261.9 C641.2 254.8 633.9 254.7 629.0 257.8 C631.7 263.0 638.0 266.5 644.1 261.9Z" fill="#8b8189" opacity="0.9"/>
<path d="M644.1 261.9 C651.3 259.6 651.5 252.7 648.6 248.0 C643.4 250.1 639.6 255.8 644.1 261.9Z" fill="#8b8189" opacity="0.9"/>
<path d="M639.7 250.3 C637.2 243.8 630.7 243.7 626.3 246.5 C628.5 251.2 634.1 254.6 639.7 250.3Z" fill="#8b8189" opacity="0.9"/>
<path d="M639.7 250.3 C646.3 248.8 646.7 242.9 644.2 238.6 C639.4 240.1 635.8 244.8 639.7 250.3Z" fill="#8b8189" opacity="0.9"/>
<path d="M635.8 238.6 C634.3 232.5 628.6 231.9 624.5 234.1 C626.0 238.5 630.5 242.0 635.8 238.6Z" fill="#8b8189" opacity="0.9"/>
<path d="M635.8 238.6 C642.2 237.9 644.0 232.1 642.8 227.4 C638.0 228.3 633.5 232.5 635.8 238.6Z" fill="#8b8189" opacity="0.9"/>
<path d="M632.4 226.6 C631.6 220.8 626.2 219.1 621.9 220.3 C622.8 224.6 626.8 228.7 632.4 226.6Z" fill="#8b8189" opacity="0.9"/>
<path d="M632.4 226.6 C638.4 226.3 640.7 220.8 640.1 216.3 C635.6 216.9 631.0 220.8 632.4 226.6Z" fill="#8b8189" opacity="0.9"/>
<path d="M630.0 217.0 C633.3 212.6 630.9 207.6 627.4 205.4 C625.1 208.9 625.1 214.4 630.0 217.0Z" fill="#8b8189" opacity="0.9"/>
<path d="M630.0 356.0 Q614.4 314.6 588.0 279.0" fill="none" stroke="#a9ad8a" stroke-width="0.9" opacity="0.95"/>
<path d="M624.2 341.8 C621.0 333.6 612.8 333.6 607.3 337.3 C610.3 343.2 617.4 347.2 624.2 341.8Z" fill="#b4b892" opacity="0.95"/>
<path d="M624.2 341.8 C632.9 341.6 635.4 334.2 633.7 328.0 C627.2 328.7 621.3 333.7 624.2 341.8Z" fill="#b4b892" opacity="0.95"/>
<path d="M616.1 324.5 C613.0 316.8 604.9 316.4 599.4 319.4 C602.3 325.0 609.3 329.2 616.1 324.5Z" fill="#b4b892" opacity="0.95"/>
<path d="M616.1 324.5 C623.9 321.0 624.2 312.5 621.1 306.9 C615.5 310.0 611.4 317.4 616.1 324.5Z" fill="#b4b892" opacity="0.95"/>
<path d="M607.0 307.7 C604.0 300.8 596.7 300.5 591.8 303.4 C594.4 308.4 600.8 312.1 607.0 307.7Z" fill="#b4b892" opacity="0.95"/>
<path d="M607.0 307.7 C614.4 305.5 615.7 298.0 613.6 292.5 C608.1 294.7 603.6 300.8 607.0 307.7Z" fill="#b4b892" opacity="0.95"/>
<path d="M596.9 291.5 C592.7 286.2 586.4 287.7 582.9 291.4 C586.4 295.2 592.6 296.8 596.9 291.5Z" fill="#b4b892" opacity="0.95"/>
<path d="M596.9 291.5 C603.2 288.7 603.6 281.8 601.1 277.1 C596.4 279.7 593.0 285.7 596.9 291.5Z" fill="#b4b892" opacity="0.95"/>
<circle cx="590" cy="272" r="5.500" fill="#d3d4ba" opacity=".85"/>
<circle cx="669" cy="213" r="4.500" fill="#dcdccb" opacity=".7"/>
<path d="M841.0 269.0 Q863.5 243.9 877.0 213.0" fill="none" stroke="#a9ad8a" stroke-width="0.9" opacity="0.95"/>
<path d="M848.5 260.1 C854.7 253.5 851.4 245.4 845.8 241.4 C841.6 246.8 840.8 255.5 848.5 260.1Z" fill="#b8bb95" opacity="0.95"/>
<path d="M848.5 260.1 C854.0 267.3 862.7 265.5 867.7 260.8 C863.1 255.7 854.5 253.3 848.5 260.1Z" fill="#b8bb95" opacity="0.95"/>
<path d="M857.2 248.5 C862.2 242.0 858.5 235.1 853.1 232.2 C849.7 237.4 849.7 245.2 857.2 248.5Z" fill="#b8bb95" opacity="0.95"/>
<path d="M857.2 248.5 C862.3 254.3 868.3 251.6 871.2 246.6 C867.1 242.6 860.5 241.5 857.2 248.5Z" fill="#b8bb95" opacity="0.95"/>
<path d="M865.0 236.3 C868.4 229.8 863.9 225.0 858.6 223.8 C856.6 228.8 857.9 235.2 865.0 236.3Z" fill="#b8bb95" opacity="0.95"/>
<path d="M865.0 236.3 C871.1 240.9 877.6 237.5 880.4 232.6 C875.6 229.5 868.3 229.4 865.0 236.3Z" fill="#b8bb95" opacity="0.95"/>
<path d="M872.0 223.6 C875.2 217.7 871.2 212.7 866.4 211.2 C864.4 215.8 865.5 222.0 872.0 223.6Z" fill="#b8bb95" opacity="0.95"/>
<path d="M872.0 223.6 C877.0 228.2 882.8 225.6 885.6 221.4 C881.6 218.2 875.3 217.6 872.0 223.6Z" fill="#b8bb95" opacity="0.95"/>
<path d="M877.0 213.0 C883.1 211.3 884.1 205.2 882.3 200.8 C877.9 202.5 874.1 207.4 877.0 213.0Z" fill="#b8bb95" opacity="0.95"/>
<circle cx="882" cy="205" r="2.500" fill="#d3d4ba" opacity=".8"/>
<path d="M826.0 276.0 C835.7 272.8 839.3 261.8 838.0 254.0 C830.7 257.2 823.5 266.0 826.0 276.0Z" fill="#c3c6a6" opacity="0.8"/>
<path d="M863 412 Q885 385 912 370" fill="none" stroke="#5f5860" stroke-width="1"/>
<path d="M865.0 410.0 C872.4 400.7 866.9 391.1 859.0 387.0 C854.1 394.4 854.0 405.5 865.0 410.0Z" fill="#5f5860" opacity="0.95"/>
<path d="M879.0 395.0 C886.3 386.0 881.4 375.7 874.0 371.0 C869.1 378.3 868.7 389.6 879.0 395.0Z" fill="#5f5860" opacity="0.95"/>
<path d="M893.0 383.0 C901.6 378.1 901.2 368.2 897.0 362.0 C890.8 366.3 886.8 375.3 893.0 383.0Z" fill="#5f5860" opacity="0.95"/>
<path d="M895.0 385.0 C902.2 391.4 914.1 391.1 921.0 388.0 C914.9 383.4 903.4 380.4 895.0 385.0Z" fill="#5f5860" opacity="0.95"/>
<circle cx="917.500" cy="367.500" r="4.300" fill="#5f5860" opacity=".95"/>
<path d="M864.0 423.0 C882.4 428.8 902.3 417.3 911.0 405.0 C896.2 401.7 873.8 406.4 864.0 423.0Z" fill="#4a454c" opacity="0.97"/>
<path d="M862.0 437.0 C863.4 454.3 879.7 466.4 893.0 469.0 C890.8 455.6 879.2 438.9 862.0 437.0Z" fill="#403c42" opacity="0.97"/>
<path d="M660.0 390.0 C639.2 390.8 628.2 410.0 628.0 426.0 C643.8 424.0 661.6 410.8 660.0 390.0Z" fill="#7a757c" opacity="0.92"/>
<path d="M645.0 380.0 C638.3 370.4 625.2 370.0 617.0 374.0 C622.8 381.0 634.9 386.0 645.0 380.0Z" fill="#9a949a" opacity="0.85"/>
<path d="M664.0 298.0 C654.9 289.4 640.3 290.9 632.0 296.0 C639.7 302.1 653.9 305.4 664.0 298.0Z" fill="#9ea28c" opacity="0.75"/>
<path d="M668.0 305.0 C657.1 303.5 645.2 310.9 640.0 318.0 C648.8 318.6 662.1 314.3 668.0 305.0Z" fill="#b7b9a4" opacity="0.7"/>
<g transform="rotate(8 784.0 259.0)">
<path d="M784.0 209.0 C809.4 209.0 825.0 234.0 825.0 255.0 C825.0 281.5 801.2 306.0 784.0 309.0 C766.8 306.0 743.0 281.5 743.0 255.0 C743.0 234.0 758.6 209.0 784.0 209.0Z" fill="url(#bg1)"/>
<ellipse cx="782.0" cy="256.5" rx="20.5" ry="21.0" fill="#8a8088" opacity="0.32" filter="url(#blur4)"/>
<path d="M781.0 312.0 L784.0 307.5 L787.0 312.0Z" fill="#1b181c"/>
</g>
<g transform="rotate(22 852.0 325.0)">
<path d="M852.0 268.0 C880.5 268.0 898.0 296.5 898.0 320.4 C898.0 350.6 871.3 378.6 852.0 382.0 C832.7 378.6 806.0 350.6 806.0 320.4 C806.0 296.5 823.5 268.0 852.0 268.0Z" fill="url(#bg2)"/>
<ellipse cx="849.7" cy="322.1" rx="23.0" ry="23.9" fill="#8a8088" opacity="0.32" filter="url(#blur4)"/>
<path d="M849.0 385.0 L852.0 380.5 L855.0 385.0Z" fill="#1b181c"/>
</g>
<g transform="rotate(-12 676.0 347.0)">
<path d="M676.0 300.0 C704.5 300.0 722.0 323.5 722.0 343.2 C722.0 368.1 695.3 391.2 676.0 394.0 C656.7 391.2 630.0 368.1 630.0 343.2 C630.0 323.5 647.5 300.0 676.0 300.0Z" fill="url(#bg3)"/>
<ellipse cx="673.7" cy="344.6" rx="23.0" ry="19.7" fill="#8a8088" opacity="0.32" filter="url(#blur4)"/>
</g>
<path d="M777 350 C774 362 770 372 766 384" stroke="#242126" stroke-width="2.6" fill="none"/>
<path d="M802 383 C797 391 793 397 789 404" stroke="#242126" stroke-width="2.6" fill="none"/>
<path d="M797.0 441.0 C796.0 456.1 808.7 467.8 820.0 471.0 C819.8 459.2 811.8 443.9 797.0 441.0Z" fill="#969c85" opacity="0.92"/>
<path d="M762.0 409.0 C782.9 409.2 792.3 390.8 791.0 375.0 C775.2 376.2 758.5 388.4 762.0 409.0Z" fill="#6f746d" opacity="0.97"/>
<path d="M768.0 444.0 C765.5 461.0 779.2 473.7 792.0 477.0 C792.8 463.8 784.9 446.8 768.0 444.0Z" fill="#5f645e" opacity="0.97"/>
<path d="M735.0 446.0 C739.1 466.2 759.4 473.7 775.0 471.0 C770.6 455.8 754.9 440.8 735.0 446.0Z" fill="#555a55" opacity="0.97"/>
<path d="M750.0 441.0 C771.6 453.1 794.3 440.3 804.0 424.0 C786.7 416.2 760.8 418.7 750.0 441.0Z" fill="#626760" opacity="0.98"/>
<path d="M736.0 452.0 C732.3 463.2 739.9 473.8 748.0 478.0 C750.1 469.2 746.9 456.4 736.0 452.0Z" fill="#4e534f" opacity="0.95"/>
<path d="M798.0 457.0 Q798.3 480.6 806.0 503.0" fill="none" stroke="#77736f" stroke-width="0.9" opacity="0.9"/>
<path d="M798.5 467.4 C798.9 471.5 802.4 472.4 805.3 471.4 C804.8 468.4 802.2 465.7 798.5 467.4Z" fill="#77736f" opacity="0.9"/>
<path d="M798.5 467.4 C794.3 466.4 791.3 469.7 790.7 472.9 C794.0 473.5 798.1 471.8 798.5 467.4Z" fill="#77736f" opacity="0.9"/>
<path d="M800.2 480.3 C801.1 484.0 804.8 484.8 807.5 483.8 C806.6 481.0 803.6 478.7 800.2 480.3Z" fill="#77736f" opacity="0.9"/>
<path d="M800.2 480.3 C796.6 479.6 794.8 482.4 794.9 485.1 C797.6 485.5 800.6 484.0 800.2 480.3Z" fill="#77736f" opacity="0.9"/>
<path d="M803.0 493.0 C803.7 496.2 806.8 496.7 809.0 495.7 C808.2 493.3 805.8 491.4 803.0 493.0Z" fill="#77736f" opacity="0.9"/>
<path d="M803.0 493.0 C799.7 493.2 798.7 496.2 799.3 498.6 C801.7 498.2 804.0 496.1 803.0 493.0Z" fill="#77736f" opacity="0.9"/>
<path d="M806.0 503.0 C804.5 505.7 806.2 508.5 808.3 509.6 C809.3 507.4 808.9 504.2 806.0 503.0Z" fill="#77736f" opacity="0.9"/>
<path d="M767.0 381.0 C769.7 368.8 760.2 359.5 751.0 357.0 C749.8 366.5 754.7 378.8 767.0 381.0Z" fill="#b7ba98" opacity="0.9"/>
<path d="M757.0 356.0 C755.8 367.5 763.7 380.3 771.0 386.0 C771.3 376.7 766.6 362.5 757.0 356.0Z" fill="#c6c9ad" opacity="0.8"/>
<path d="M688.0 458.0 C684.1 449.3 673.4 446.0 666.0 447.0 C669.6 453.5 678.7 460.1 688.0 458.0Z" fill="#a5a883" opacity="0.95"/>
<path d="M689.0 460.0 C684.0 466.4 687.1 474.2 692.0 478.0 C695.4 472.8 695.8 464.4 689.0 460.0Z" fill="#a5a883" opacity="0.95"/>
<path d="M700.0 461.0 C696.9 469.0 702.1 476.9 708.0 480.0 C709.9 473.6 707.9 464.4 700.0 461.0Z" fill="#a5a883" opacity="0.95"/>
<path d="M712.0 456.0 C713.8 464.3 722.5 467.8 729.0 467.0 C727.0 460.7 720.4 454.3 712.0 456.0Z" fill="#a5a883" opacity="0.95"/>
<path d="M672.0 438.0 C672.2 430.4 665.7 427.3 660.0 428.0 C660.3 433.7 664.6 439.6 672.0 438.0Z" fill="#a5a883" opacity="0.95"/>
<g transform="translate(697.0 259.0) rotate(-15) scale(1 0.9) translate(-697.0 -259.0)">
<circle cx="697.0" cy="259.0" r="40.3" fill="#dfdaca"/>
<path d="M693.7 243.0 C701.7 238.7 707.2 230.0 705.3 220.9 C703.5 212.0 693.4 210.0 687.0 210.3 C681.0 212.5 672.6 218.4 674.4 227.2 C676.3 236.4 684.7 242.1 693.7 243.0Z" fill="#e9e5d8" stroke="#c5bea9" stroke-width="0.45" opacity="1"/>
<path d="M705.8 245.2 C713.9 247.4 723.1 245.0 727.9 237.5 C732.5 230.2 727.2 222.3 722.8 218.4 C717.4 216.1 708.0 214.7 703.4 221.9 C698.7 229.4 700.4 238.8 705.8 245.2Z" fill="#dfdaca" stroke="#c5bea9" stroke-width="0.45" opacity="1"/>
<path d="M712.8 254.8 C717.5 262.0 726.3 266.6 735.4 264.2 C744.1 261.8 745.7 252.2 745.2 246.2 C742.7 240.7 736.5 233.1 727.8 235.5 C718.7 237.9 713.3 246.2 712.8 254.8Z" fill="#efece1" stroke="#c5bea9" stroke-width="0.45" opacity="1"/>
<path d="M711.8 265.8 C710.9 273.6 714.5 282.0 722.2 285.5 C729.7 288.9 736.4 283.0 739.5 278.4 C740.9 273.1 741.0 264.1 733.5 260.7 C725.8 257.2 717.2 260.0 711.8 265.8Z" fill="#e9e5d8" stroke="#c5bea9" stroke-width="0.45" opacity="1"/>
<path d="M705.4 273.0 C700.1 279.3 698.5 288.8 703.3 296.8 C707.9 304.6 717.2 303.7 722.5 301.7 C726.8 297.9 732.0 290.2 727.4 282.4 C722.6 274.4 713.4 271.3 705.4 273.0Z" fill="#dfdaca" stroke="#c5bea9" stroke-width="0.45" opacity="1"/>
<path d="M693.2 274.9 C685.5 275.5 678.0 280.5 676.1 288.7 C674.2 296.6 681.2 302.0 686.2 304.1 C691.6 304.5 700.2 302.9 702.1 295.0 C704.1 286.8 699.8 278.9 693.2 274.9Z" fill="#efece1" stroke="#c5bea9" stroke-width="0.45" opacity="1"/>
<path d="M684.6 269.6 C677.2 265.1 667.3 264.7 660.3 270.7 C653.5 276.6 656.4 286.0 659.5 291.2 C664.2 295.1 673.1 299.4 679.9 293.6 C686.9 287.5 688.0 277.6 684.6 269.6Z" fill="#e9e5d8" stroke="#c5bea9" stroke-width="0.45" opacity="1"/>
<path d="M680.7 257.6 C678.9 249.4 672.6 242.2 663.9 241.4 C655.5 240.7 651.0 249.1 649.5 254.8 C649.9 260.7 652.9 269.8 661.3 270.5 C670.1 271.3 677.5 265.3 680.7 257.6Z" fill="#dfdaca" stroke="#c5bea9" stroke-width="0.45" opacity="1"/>
<path d="M684.9 248.1 C688.0 240.8 686.8 231.5 680.1 225.5 C673.7 219.7 665.4 223.1 661.0 226.5 C658.1 231.2 655.5 239.8 662.0 245.6 C668.6 251.7 678.0 251.9 684.9 248.1Z" fill="#efece1" stroke="#c5bea9" stroke-width="0.45" opacity="1"/>
<path d="M702.7 253.8 C710.0 258.0 719.5 258.2 726.0 252.3 C732.3 246.5 729.1 237.5 725.9 232.6 C721.2 228.9 712.5 225.0 706.2 230.7 C699.7 236.7 699.1 246.2 702.7 253.8Z" fill="#dfdaca" stroke="#c5bea9" stroke-width="0.45" opacity="1"/>
<path d="M704.7 259.0 C707.0 266.9 713.5 273.3 721.7 273.3 C729.6 273.3 733.1 264.7 734.0 259.0 C733.1 253.2 729.6 244.6 721.7 244.6 C713.5 244.6 707.0 251.1 704.7 259.0Z" fill="#efece1" stroke="#c5bea9" stroke-width="0.45" opacity="1"/>
<path d="M701.0 265.5 C696.2 271.3 694.6 279.8 698.9 286.8 C703.0 293.5 711.5 292.4 716.4 290.4 C720.4 286.9 725.2 279.8 721.0 273.1 C716.7 266.2 708.4 263.8 701.0 265.5Z" fill="#e9e5d8" stroke="#c5bea9" stroke-width="0.45" opacity="1"/>
<path d="M696.6 266.7 C689.5 268.8 683.3 275.5 682.9 284.2 C682.5 292.7 690.1 296.8 695.2 298.0 C700.4 297.3 708.3 293.9 708.7 285.4 C709.1 276.7 703.6 269.5 696.6 266.7Z" fill="#dfdaca" stroke="#c5bea9" stroke-width="0.45" opacity="1"/>
<path d="M690.9 263.6 C684.6 259.0 676.0 257.8 669.7 262.6 C663.7 267.1 666.0 275.7 668.6 280.5 C672.5 284.4 680.2 288.9 686.2 284.3 C692.4 279.6 693.6 271.0 690.9 263.6Z" fill="#efece1" stroke="#c5bea9" stroke-width="0.45" opacity="1"/>
<path d="M689.5 257.3 C689.1 249.1 684.6 241.4 677.0 239.6 C669.6 237.9 664.4 245.6 662.3 251.0 C661.8 256.7 663.1 265.9 670.5 267.6 C678.1 269.3 685.6 264.4 689.5 257.3Z" fill="#e9e5d8" stroke="#c5bea9" stroke-width="0.45" opacity="1"/>
<path d="M692.3 253.0 C696.8 246.2 697.6 236.9 692.2 230.1 C687.0 223.5 678.1 225.8 673.1 228.5 C669.2 232.7 664.9 240.9 670.1 247.5 C675.4 254.3 684.6 255.8 692.3 253.0Z" fill="#dfdaca" stroke="#c5bea9" stroke-width="0.45" opacity="1"/>
<path d="M697.4 251.3 C705.0 249.2 711.4 242.7 711.9 234.0 C712.3 225.6 704.4 221.5 699.0 220.3 C693.5 220.9 685.2 224.2 684.8 232.6 C684.4 241.3 690.1 248.5 697.4 251.3Z" fill="#efece1" stroke="#c5bea9" stroke-width="0.45" opacity="1"/>
<path d="M698.9 259.1 C700.4 265.5 704.8 270.8 710.6 271.0 C716.3 271.2 719.0 264.4 719.8 259.8 C719.3 255.2 717.1 248.2 711.4 248.0 C705.6 247.8 700.8 252.8 698.9 259.1Z" fill="#efece1" stroke="#c5bea9" stroke-width="0.45" opacity="1"/>
<path d="M697.8 260.8 C692.7 264.7 689.8 270.8 692.1 275.9 C694.2 280.8 701.4 280.2 705.8 278.9 C709.7 276.5 714.9 271.6 712.8 266.7 C710.5 261.6 704.1 259.7 697.8 260.8Z" fill="#e9e5d8" stroke="#c5bea9" stroke-width="0.45" opacity="1"/>
<path d="M695.9 260.5 C690.1 258.5 683.4 259.6 679.8 264.5 C676.3 269.3 679.8 275.1 682.9 278.2 C686.7 280.2 693.4 281.8 696.9 277.1 C700.5 272.1 699.5 265.4 695.9 260.5Z" fill="#dfdaca" stroke="#c5bea9" stroke-width="0.45" opacity="1"/>
<path d="M695.1 258.6 C694.7 252.4 691.0 246.6 685.1 245.3 C679.3 244.0 675.3 249.8 673.7 253.9 C673.4 258.2 674.6 265.2 680.4 266.4 C686.4 267.8 692.1 264.0 695.1 258.6Z" fill="#efece1" stroke="#c5bea9" stroke-width="0.45" opacity="1"/>
<path d="M696.5 257.1 C702.7 253.7 706.9 247.7 705.3 241.8 C703.8 236.2 695.9 235.7 690.9 236.4 C686.2 238.3 679.7 242.7 681.2 248.3 C682.8 254.2 689.4 257.3 696.5 257.1Z" fill="#e9e5d8" stroke="#c5bea9" stroke-width="0.45" opacity="1"/>
<path d="M698.1 257.4 C704.2 259.8 711.0 259.2 714.4 254.5 C717.6 250.0 713.5 244.0 710.2 240.8 C706.1 238.7 699.2 236.6 695.9 241.1 C692.5 245.8 694.0 252.4 698.1 257.4Z" fill="#dfdaca" stroke="#c5bea9" stroke-width="0.45" opacity="1"/>
</g>
<ellipse cx="699.0" cy="255.0" rx="14.1" ry="10.1" fill="none" stroke="#4a4545" stroke-width="2" stroke-dasharray="0.8 0.9"/>
<ellipse cx="699.0" cy="255.0" rx="11.6" ry="7.6" fill="#353132"/>
<ellipse cx="701.0" cy="263.6" rx="9.6" ry="4.5" fill="#efece1" stroke="#c5bea9" stroke-width=".4"/>
<g transform="translate(815.0 346.0) rotate(20) scale(1 0.98) translate(-815.0 -346.0)">
<circle cx="815.0" cy="346.0" r="32.8" fill="#eae3d7"/>
<path d="M828.3 346.2 C830.2 352.6 835.8 358.0 843.0 358.1 C850.0 358.2 853.2 351.2 854.0 346.6 C853.3 341.9 850.3 334.8 843.4 334.7 C836.1 334.6 830.4 339.8 828.3 346.2Z" fill="#f3eee5" stroke="#d2c5b5" stroke-width="0.45" opacity="1"/>
<path d="M826.2 353.1 C824.6 359.3 826.5 366.3 832.3 370.0 C837.9 373.6 844.0 369.6 846.9 366.3 C848.7 362.2 849.7 355.0 844.1 351.5 C838.3 347.8 831.1 349.1 826.2 353.1Z" fill="#eae3d7" stroke="#d2c5b5" stroke-width="0.45" opacity="1"/>
<path d="M818.2 358.9 C811.8 362.5 807.6 369.3 809.3 376.2 C810.9 382.9 819.1 384.1 824.2 383.6 C829.0 381.7 835.7 376.9 834.0 370.2 C832.3 363.3 825.4 359.2 818.2 358.9Z" fill="#f7f3ec" stroke="#d2c5b5" stroke-width="0.45" opacity="1"/>
<path d="M811.8 358.9 C805.0 359.3 798.4 363.4 796.7 370.3 C795.1 376.9 801.2 381.6 805.6 383.5 C810.4 383.9 818.0 382.7 819.7 376.0 C821.4 369.1 817.6 362.4 811.8 358.9Z" fill="#f3eee5" stroke="#d2c5b5" stroke-width="0.45" opacity="1"/>
<path d="M805.0 354.7 C798.8 350.7 790.8 350.0 785.3 354.8 C780.0 359.3 782.7 367.1 785.4 371.5 C789.4 374.9 796.7 378.7 802.0 374.1 C807.4 369.4 808.0 361.3 805.0 354.7Z" fill="#eae3d7" stroke="#d2c5b5" stroke-width="0.45" opacity="1"/>
<path d="M801.8 344.9 C800.2 338.0 794.6 332.1 787.0 331.4 C779.6 330.8 775.7 337.7 774.5 342.5 C774.9 347.4 777.5 354.9 784.9 355.5 C792.6 356.2 799.0 351.3 801.8 344.9Z" fill="#f7f3ec" stroke="#d2c5b5" stroke-width="0.45" opacity="1"/>
<path d="M805.0 337.2 C807.7 330.8 806.6 322.8 800.8 317.6 C795.1 312.6 787.9 315.8 784.1 318.8 C781.6 322.9 779.4 330.5 785.0 335.5 C790.9 340.7 799.0 340.7 805.0 337.2Z" fill="#f3eee5" stroke="#d2c5b5" stroke-width="0.45" opacity="1"/>
<path d="M811.5 333.2 C817.5 329.5 821.4 322.8 819.6 316.2 C817.8 309.8 809.9 308.9 805.0 309.5 C800.4 311.5 794.1 316.3 795.8 322.7 C797.7 329.4 804.4 333.1 811.5 333.2Z" fill="#eae3d7" stroke="#d2c5b5" stroke-width="0.45" opacity="1"/>
<path d="M818.8 333.3 C825.9 333.2 832.8 329.0 835.0 321.7 C837.2 314.7 831.1 309.5 826.7 307.3 C821.9 306.7 814.0 307.7 811.8 314.7 C809.6 322.0 813.1 329.3 818.8 333.3Z" fill="#f7f3ec" stroke="#d2c5b5" stroke-width="0.45" opacity="1"/>
<path d="M825.2 337.6 C831.2 341.7 839.0 342.7 844.3 338.3 C849.5 334.1 846.9 326.4 844.2 322.0 C840.4 318.5 833.3 314.5 828.2 318.7 C822.9 323.1 822.3 330.9 825.2 337.6Z" fill="#f3eee5" stroke="#d2c5b5" stroke-width="0.45" opacity="1"/>
<path d="M819.4 350.4 C816.5 355.9 816.7 362.9 821.3 367.6 C825.8 372.1 832.3 369.6 835.8 367.1 C838.3 363.6 840.9 357.2 836.5 352.7 C831.9 348.0 824.9 347.7 819.4 350.4Z" fill="#eae3d7" stroke="#d2c5b5" stroke-width="0.45" opacity="1"/>
<path d="M814.5 352.2 C808.6 353.8 803.5 359.1 802.9 366.2 C802.4 373.1 808.5 376.6 812.7 377.7 C817.0 377.2 823.5 374.7 824.0 367.8 C824.5 360.6 820.2 354.7 814.5 352.2Z" fill="#f7f3ec" stroke="#d2c5b5" stroke-width="0.45" opacity="1"/>
<path d="M810.4 350.2 C804.9 346.9 797.7 346.6 792.9 350.9 C788.2 355.1 790.6 362.0 793.1 365.7 C796.6 368.6 803.1 371.7 807.8 367.5 C812.6 363.1 813.1 356.0 810.4 350.2Z" fill="#f3eee5" stroke="#d2c5b5" stroke-width="0.45" opacity="1"/>
<path d="M808.8 346.1 C806.9 340.4 801.8 335.8 795.4 335.9 C789.3 335.9 786.6 342.2 785.9 346.3 C786.7 350.5 789.5 356.7 795.6 356.6 C802.0 356.5 807.0 351.8 808.8 346.1Z" fill="#eae3d7" stroke="#d2c5b5" stroke-width="0.45" opacity="1"/>
<path d="M810.3 341.8 C812.9 336.0 812.0 328.6 806.7 323.8 C801.6 319.3 795.0 322.2 791.5 325.0 C789.1 328.8 787.0 335.7 792.1 340.3 C797.3 345.0 804.8 345.0 810.3 341.8Z" fill="#f7f3ec" stroke="#d2c5b5" stroke-width="0.45" opacity="1"/>
<path d="M814.7 339.8 C821.1 337.4 826.2 331.5 825.9 324.5 C825.5 317.6 818.1 315.0 813.3 314.5 C808.5 315.5 801.5 318.9 801.9 325.8 C802.3 332.8 808.0 338.1 814.7 339.8Z" fill="#f3eee5" stroke="#d2c5b5" stroke-width="0.45" opacity="1"/>
<path d="M819.4 341.6 C824.8 344.4 831.6 344.2 836.1 339.7 C840.5 335.4 838.0 329.0 835.5 325.6 C832.1 323.1 825.8 320.6 821.4 324.9 C816.9 329.4 816.7 336.3 819.4 341.6Z" fill="#eae3d7" stroke="#d2c5b5" stroke-width="0.45" opacity="1"/>
<path d="M821.2 345.5 C823.6 350.9 829.1 355.1 835.6 354.5 C841.9 354.0 844.2 347.6 844.5 343.5 C843.5 339.5 840.2 333.6 833.9 334.1 C827.3 334.7 822.6 339.7 821.2 345.5Z" fill="#f7f3ec" stroke="#d2c5b5" stroke-width="0.45" opacity="1"/>
<path d="M815.2 347.5 C809.9 349.6 805.8 353.9 806.4 358.7 C807.0 363.3 813.3 364.6 817.4 364.6 C821.3 363.5 827.1 360.7 826.5 356.1 C825.9 351.4 820.9 348.2 815.2 347.5Z" fill="#f7f3ec" stroke="#d2c5b5" stroke-width="0.45" opacity="1"/>
<path d="M813.7 346.8 C809.9 343.1 804.6 341.3 800.5 343.7 C796.6 346.0 797.7 351.8 799.2 355.3 C801.5 358.2 806.1 362.0 810.0 359.7 C814.0 357.4 815.1 351.9 813.7 346.8Z" fill="#f3eee5" stroke="#d2c5b5" stroke-width="0.45" opacity="1"/>
<path d="M813.6 345.3 C814.7 340.2 813.2 334.9 809.0 332.8 C805.0 330.8 800.7 334.8 798.7 337.9 C797.5 341.4 796.8 347.2 800.8 349.2 C805.0 351.3 810.2 349.2 813.6 345.3Z" fill="#eae3d7" stroke="#d2c5b5" stroke-width="0.45" opacity="1"/>
<path d="M814.7 344.5 C820.0 342.2 824.0 337.8 823.1 333.3 C822.4 328.9 816.0 328.0 811.9 328.3 C807.9 329.5 802.2 332.5 803.0 336.9 C803.8 341.4 809.0 344.2 814.7 344.5Z" fill="#f7f3ec" stroke="#d2c5b5" stroke-width="0.45" opacity="1"/>
<path d="M816.2 345.0 C820.6 348.3 826.3 349.3 830.0 346.3 C833.5 343.4 831.4 337.6 829.4 334.3 C826.6 331.6 821.3 328.4 817.7 331.3 C814.1 334.3 813.9 340.0 816.2 345.0Z" fill="#f3eee5" stroke="#d2c5b5" stroke-width="0.45" opacity="1"/>
<path d="M816.3 346.8 C814.9 351.7 815.8 357.1 819.7 359.5 C823.5 361.7 828.0 358.1 830.3 355.2 C831.7 351.9 832.9 346.2 829.1 343.9 C825.2 341.6 820.0 343.2 816.3 346.8Z" fill="#eae3d7" stroke="#d2c5b5" stroke-width="0.45" opacity="1"/>
</g>
<g transform="translate(739.0 317.0) rotate(0) scale(1 0.98) translate(-739.0 -317.0)">
<circle cx="739.0" cy="317.0" r="38.6" fill="#ede7dc"/>
<path d="M739.5 332.6 C731.3 335.4 724.8 342.4 725.1 351.0 C725.4 359.3 734.5 362.6 740.6 363.3 C746.6 362.2 755.5 358.2 755.2 349.9 C754.9 341.3 747.9 334.8 739.5 332.6Z" fill="#f5f1e9" stroke="#d0c6b8" stroke-width="0.45" opacity="1"/>
<path d="M728.1 328.2 C721.2 325.2 712.1 326.3 705.7 332.8 C699.6 339.1 702.3 347.2 705.3 351.5 C709.6 354.4 717.8 356.9 724.0 350.6 C730.4 344.1 731.3 335.0 728.1 328.2Z" fill="#ede7dc" stroke="#d0c6b8" stroke-width="0.45" opacity="1"/>
<path d="M724.1 321.6 C719.2 314.5 710.5 310.2 702.0 312.8 C693.8 315.3 692.7 325.0 693.6 331.0 C696.2 336.4 702.5 343.8 710.8 341.3 C719.3 338.7 724.0 330.2 724.1 321.6Z" fill="#f9f6f0" stroke="#d0c6b8" stroke-width="0.45" opacity="1"/>
<path d="M725.3 309.4 C726.5 302.1 723.3 293.7 715.6 289.5 C708.2 285.4 701.2 290.2 697.9 294.2 C696.3 299.1 695.9 307.6 703.3 311.7 C710.9 315.9 719.7 314.3 725.3 309.4Z" fill="#f5f1e9" stroke="#d0c6b8" stroke-width="0.45" opacity="1"/>
<path d="M733.1 302.5 C739.7 297.0 743.1 287.8 739.6 279.3 C736.3 271.1 726.6 270.8 720.8 272.1 C715.7 275.2 709.0 282.2 712.3 290.4 C715.8 298.9 724.6 303.1 733.1 302.5Z" fill="#ede7dc" stroke="#d0c6b8" stroke-width="0.45" opacity="1"/>
<path d="M745.5 302.8 C753.2 303.4 761.7 299.2 765.5 290.8 C769.2 282.7 763.6 275.8 759.1 272.7 C753.9 271.4 745.0 271.7 741.3 279.8 C737.4 288.2 739.9 297.3 745.5 302.8Z" fill="#f9f6f0" stroke="#d0c6b8" stroke-width="0.45" opacity="1"/>
<path d="M751.6 307.8 C758.1 312.6 767.0 313.9 773.7 309.1 C780.1 304.4 778.0 295.5 775.5 290.5 C771.5 286.5 763.7 281.8 757.2 286.4 C750.6 291.3 749.0 300.2 751.6 307.8Z" fill="#f5f1e9" stroke="#d0c6b8" stroke-width="0.45" opacity="1"/>
<path d="M754.3 320.2 C755.2 328.6 760.9 336.5 770.0 338.4 C778.6 340.2 784.3 332.5 786.5 327.1 C786.7 321.2 784.7 311.9 776.0 310.0 C767.0 308.1 758.5 313.0 754.3 320.2Z" fill="#ede7dc" stroke="#d0c6b8" stroke-width="0.45" opacity="1"/>
<path d="M748.7 329.2 C744.4 336.0 743.9 345.4 749.5 352.4 C754.9 359.2 763.8 357.1 768.7 354.4 C772.5 350.2 776.6 342.0 771.2 335.2 C765.6 328.2 756.3 326.5 748.7 329.2Z" fill="#f9f6f0" stroke="#d0c6b8" stroke-width="0.45" opacity="1"/>
<path d="M731.8 315.5 C730.9 308.3 725.8 301.5 717.7 299.8 C710.0 298.1 705.0 304.6 703.1 309.3 C702.9 314.3 704.8 322.3 712.6 324.0 C720.6 325.7 728.1 321.6 731.8 315.5Z" fill="#ede7dc" stroke="#d0c6b8" stroke-width="0.45" opacity="1"/>
<path d="M736.4 310.1 C742.1 305.5 745.1 297.6 742.3 290.1 C739.6 282.8 731.3 282.2 726.3 283.1 C721.9 285.7 716.0 291.6 718.8 298.9 C721.6 306.4 729.1 310.4 736.4 310.1Z" fill="#f9f6f0" stroke="#d0c6b8" stroke-width="0.45" opacity="1"/>
<path d="M740.7 309.8 C748.3 309.4 755.5 305.0 757.3 297.5 C759.0 290.4 752.0 285.4 747.0 283.3 C741.6 282.9 733.1 284.2 731.4 291.4 C729.6 298.8 734.1 306.0 740.7 309.8Z" fill="#f5f1e9" stroke="#d0c6b8" stroke-width="0.45" opacity="1"/>
<path d="M745.7 314.0 C750.3 319.2 757.9 321.8 764.7 318.8 C771.3 315.9 771.4 308.0 770.2 303.3 C767.5 299.2 761.7 293.9 755.1 296.8 C748.2 299.8 745.0 307.1 745.7 314.0Z" fill="#ede7dc" stroke="#d0c6b8" stroke-width="0.45" opacity="1"/>
<path d="M746.0 319.4 C745.9 326.8 749.9 334.2 757.5 336.8 C764.8 339.3 770.5 333.2 773.0 328.6 C773.8 323.5 773.1 315.2 765.8 312.7 C758.2 310.1 750.4 313.5 746.0 319.4Z" fill="#f9f6f0" stroke="#d0c6b8" stroke-width="0.45" opacity="1"/>
<path d="M742.7 323.4 C738.2 328.6 736.8 336.8 740.9 343.7 C744.8 350.4 752.6 349.7 757.2 348.1 C760.8 344.9 765.3 338.4 761.4 331.7 C757.3 324.8 749.5 322.0 742.7 323.4Z" fill="#f5f1e9" stroke="#d0c6b8" stroke-width="0.45" opacity="1"/>
<path d="M737.0 324.1 C728.9 324.1 721.2 328.4 719.0 335.9 C717.0 343.2 724.2 348.8 729.4 351.1 C735.0 351.8 744.1 350.9 746.1 343.6 C748.3 336.0 743.8 328.3 737.0 324.1Z" fill="#ede7dc" stroke="#d0c6b8" stroke-width="0.45" opacity="1"/>
<path d="M732.3 320.0 C727.2 314.5 718.8 311.9 711.2 315.4 C703.9 318.7 703.9 327.3 705.2 332.4 C708.2 336.7 714.6 342.3 721.9 339.0 C729.5 335.5 733.1 327.5 732.3 320.0Z" fill="#f9f6f0" stroke="#d0c6b8" stroke-width="0.45" opacity="1"/>
<path d="M739.3 318.8 C733.3 321.5 728.9 327.0 729.8 332.9 C730.7 338.5 738.0 340.0 742.6 339.9 C747.1 338.5 753.5 334.9 752.6 329.2 C751.7 323.3 745.8 319.5 739.3 318.8Z" fill="#f9f6f0" stroke="#d0c6b8" stroke-width="0.45" opacity="1"/>
<path d="M737.6 318.1 C732.6 314.2 726.3 312.8 722.1 316.1 C718.2 319.2 720.6 325.8 722.9 329.7 C726.1 332.8 732.0 336.7 735.9 333.6 C740.0 330.4 740.2 323.9 737.6 318.1Z" fill="#f5f1e9" stroke="#d0c6b8" stroke-width="0.45" opacity="1"/>
<path d="M737.4 316.2 C738.6 310.2 736.9 304.0 732.0 301.4 C727.2 299.0 722.2 303.7 719.7 307.2 C718.3 311.3 717.5 318.0 722.3 320.5 C727.2 323.0 733.3 320.7 737.4 316.2Z" fill="#ede7dc" stroke="#d0c6b8" stroke-width="0.45" opacity="1"/>
<path d="M738.9 315.2 C744.6 313.1 749.1 308.2 748.8 302.3 C748.5 296.6 742.0 294.4 737.7 294.0 C733.5 294.8 727.3 297.7 727.6 303.4 C728.0 309.4 733.0 313.8 738.9 315.2Z" fill="#f9f6f0" stroke="#d0c6b8" stroke-width="0.45" opacity="1"/>
<path d="M740.4 315.8 C745.6 319.2 752.1 320.0 756.2 316.3 C760.1 312.8 757.4 306.3 754.9 302.7 C751.5 299.8 745.4 296.5 741.4 300.0 C737.4 303.7 737.5 310.2 740.4 315.8Z" fill="#f5f1e9" stroke="#d0c6b8" stroke-width="0.45" opacity="1"/>
<path d="M740.6 317.8 C739.1 324.3 740.4 330.9 745.2 333.4 C749.8 335.7 755.1 330.5 757.7 326.6 C759.3 322.1 760.5 314.8 755.9 312.4 C751.1 310.0 744.9 312.8 740.6 317.8Z" fill="#ede7dc" stroke="#d0c6b8" stroke-width="0.45" opacity="1"/>
</g>
<ellipse cx="738.0" cy="320.0" rx="12.9" ry="9.2" fill="none" stroke="#4a4545" stroke-width="2" stroke-dasharray="0.8 0.9"/>
<ellipse cx="738.0" cy="320.0" rx="10.6" ry="6.9" fill="#353132"/>
<ellipse cx="739.8" cy="327.8" rx="8.7" ry="4.1" fill="#f9f6f0" stroke="#d0c6b8" stroke-width=".4"/>
<g transform="translate(825.0 419.5) rotate(-10) scale(1 0.9) translate(-825.0 -419.5)">
<circle cx="825.0" cy="419.5" r="31.9" fill="#efd0b3"/>
<path d="M824.1 406.6 C830.8 404.2 836.1 398.4 835.6 391.6 C835.2 385.0 827.5 382.5 822.5 382.1 C817.6 383.2 810.3 386.7 810.7 393.3 C811.2 400.1 817.2 405.1 824.1 406.6Z" fill="#f3dcc4" stroke="#deb490" stroke-width="0.45" opacity="1"/>
<path d="M831.4 408.2 C837.7 409.4 844.8 406.7 848.5 400.1 C852.1 393.8 847.9 387.8 844.5 385.0 C840.3 383.5 833.0 383.1 829.4 389.4 C825.8 395.9 827.2 403.4 831.4 408.2Z" fill="#efd0b3" stroke="#deb490" stroke-width="0.45" opacity="1"/>
<path d="M836.6 413.9 C841.2 418.4 848.6 420.4 855.3 417.2 C861.8 414.0 861.7 406.7 860.5 402.3 C857.9 398.7 852.1 394.1 845.6 397.2 C839.0 400.4 835.9 407.5 836.6 413.9Z" fill="#f7e7d5" stroke="#deb490" stroke-width="0.45" opacity="1"/>
<path d="M837.1 424.0 C836.9 430.3 840.5 436.9 847.2 439.4 C853.7 441.8 858.8 436.7 861.1 432.9 C861.9 428.6 861.3 421.4 854.8 419.0 C848.1 416.5 841.1 419.1 837.1 424.0Z" fill="#f3dcc4" stroke="#deb490" stroke-width="0.45" opacity="1"/>
<path d="M833.9 428.8 C830.6 434.8 830.6 442.5 835.5 447.6 C840.3 452.5 847.5 449.8 851.4 447.1 C854.3 443.2 857.4 436.1 852.6 431.2 C847.7 426.1 840.0 425.8 833.9 428.8Z" fill="#efd0b3" stroke="#deb490" stroke-width="0.45" opacity="1"/>
<path d="M824.5 432.4 C818.2 434.1 812.9 439.2 812.6 446.0 C812.3 452.6 819.0 455.8 823.5 456.7 C828.0 456.1 834.9 453.5 835.2 447.0 C835.5 440.2 830.6 434.6 824.5 432.4Z" fill="#f7e7d5" stroke="#deb490" stroke-width="0.45" opacity="1"/>
<path d="M818.9 430.9 C812.7 430.0 805.6 433.1 802.0 439.8 C798.5 446.3 802.7 452.2 806.1 455.0 C810.3 456.3 817.5 456.4 821.0 449.9 C824.6 443.2 823.1 435.6 818.9 430.9Z" fill="#f3dcc4" stroke="#deb490" stroke-width="0.45" opacity="1"/>
<path d="M813.6 425.6 C809.0 421.0 801.9 419.0 796.0 422.2 C790.3 425.3 791.0 432.6 792.5 436.9 C795.2 440.6 801.0 445.2 806.7 442.1 C812.6 439.0 814.9 432.0 813.6 425.6Z" fill="#efd0b3" stroke="#deb490" stroke-width="0.45" opacity="1"/>
<path d="M812.8 415.2 C813.0 408.2 809.2 401.1 802.1 398.6 C795.3 396.1 789.8 401.8 787.4 406.1 C786.6 410.9 787.2 418.7 794.1 421.2 C801.2 423.7 808.6 420.6 812.8 415.2Z" fill="#f7e7d5" stroke="#deb490" stroke-width="0.45" opacity="1"/>
<path d="M818.0 408.7 C821.9 403.5 822.9 395.8 818.8 389.4 C814.8 383.2 807.4 384.1 803.2 385.9 C799.9 389.0 796.1 395.4 800.0 401.5 C804.2 407.9 811.6 410.2 818.0 408.7Z" fill="#f3dcc4" stroke="#deb490" stroke-width="0.45" opacity="1"/>
<path d="M826.8 425.3 C822.2 428.8 819.5 435.1 821.5 441.6 C823.4 447.8 829.9 448.8 833.9 448.4 C837.4 446.5 842.2 442.0 840.3 435.8 C838.3 429.3 832.5 425.6 826.8 425.3Z" fill="#efd0b3" stroke="#deb490" stroke-width="0.45" opacity="1"/>
<path d="M822.5 425.1 C816.5 424.4 810.1 427.0 807.5 432.9 C805.0 438.6 809.6 443.6 813.2 446.0 C817.3 447.1 824.2 447.1 826.7 441.5 C829.3 435.6 827.0 429.1 822.5 425.1Z" fill="#f7e7d5" stroke="#deb490" stroke-width="0.45" opacity="1"/>
<path d="M819.5 422.1 C815.6 418.0 809.3 416.2 803.7 418.9 C798.2 421.4 798.4 427.9 799.5 431.7 C801.8 435.0 806.7 439.1 812.1 436.5 C817.7 433.8 820.2 427.8 819.5 422.1Z" fill="#f3dcc4" stroke="#deb490" stroke-width="0.45" opacity="1"/>
<path d="M819.2 417.6 C819.6 410.9 816.5 404.3 810.4 402.3 C804.6 400.3 799.8 406.0 797.6 410.2 C796.8 414.9 797.1 422.3 803.0 424.3 C809.0 426.4 815.5 423.0 819.2 417.6Z" fill="#efd0b3" stroke="#deb490" stroke-width="0.45" opacity="1"/>
<path d="M822.1 414.2 C826.1 409.7 827.5 402.7 824.2 396.6 C821.0 390.7 814.2 391.0 810.2 392.3 C807.0 394.9 803.1 400.4 806.3 406.3 C809.6 412.5 816.2 415.1 822.1 414.2Z" fill="#f7e7d5" stroke="#deb490" stroke-width="0.45" opacity="1"/>
<path d="M827.1 413.8 C833.6 414.1 840.2 410.7 842.5 404.3 C844.8 398.1 839.3 393.1 835.3 390.8 C830.8 390.0 823.4 390.4 821.1 396.6 C818.8 403.0 821.8 409.8 827.1 413.8Z" fill="#f3dcc4" stroke="#deb490" stroke-width="0.45" opacity="1"/>
<path d="M830.5 417.0 C834.5 421.7 840.9 424.1 846.5 421.6 C851.9 419.2 851.6 412.2 850.5 408.1 C848.1 404.4 843.1 399.7 837.7 402.1 C832.1 404.6 829.7 410.9 830.5 417.0Z" fill="#efd0b3" stroke="#deb490" stroke-width="0.45" opacity="1"/>
<path d="M830.7 421.6 C830.7 427.5 834.2 433.7 840.7 436.0 C847.0 438.3 851.8 433.6 853.9 430.0 C854.6 426.0 853.9 419.2 847.7 416.9 C841.2 414.6 834.5 417.0 830.7 421.6Z" fill="#f7e7d5" stroke="#deb490" stroke-width="0.45" opacity="1"/>
<path d="M823.9 420.5 C819.6 417.8 814.3 417.1 811.2 420.1 C808.1 423.0 810.5 428.2 812.6 431.1 C815.5 433.5 820.6 436.1 823.6 433.3 C826.7 430.3 826.4 425.0 823.9 420.5Z" fill="#f7e7d5" stroke="#deb490" stroke-width="0.45" opacity="1"/>
<path d="M823.5 419.1 C823.5 414.2 820.8 409.6 816.2 408.3 C811.7 407.0 808.4 411.4 807.0 414.5 C806.6 417.9 807.2 423.3 811.7 424.6 C816.3 425.9 821.0 423.2 823.5 419.1Z" fill="#f3dcc4" stroke="#deb490" stroke-width="0.45" opacity="1"/>
<path d="M824.3 418.1 C828.7 414.7 831.3 409.7 829.4 405.7 C827.6 402.0 821.5 402.8 817.7 404.1 C814.3 406.2 809.7 410.4 811.5 414.2 C813.4 418.2 818.9 419.3 824.3 418.1Z" fill="#efd0b3" stroke="#deb490" stroke-width="0.45" opacity="1"/>
<path d="M825.9 418.3 C831.1 420.5 836.9 420.3 839.8 416.5 C842.6 412.8 839.2 407.6 836.4 404.7 C833.0 402.7 827.0 400.7 824.2 404.4 C821.3 408.2 822.5 413.9 825.9 418.3Z" fill="#f7e7d5" stroke="#deb490" stroke-width="0.45" opacity="1"/>
<path d="M826.5 419.7 C826.9 425.3 829.7 430.3 834.1 431.0 C838.4 431.7 841.2 426.1 842.3 422.2 C842.5 418.2 841.5 412.0 837.2 411.3 C832.8 410.6 828.6 414.5 826.5 419.7Z" fill="#f3dcc4" stroke="#deb490" stroke-width="0.45" opacity="1"/>
<path d="M825.5 421.0 C820.8 423.7 817.7 428.4 819.1 432.6 C820.3 436.8 826.4 436.9 830.2 436.2 C833.7 434.6 838.6 431.1 837.3 427.0 C836.0 422.7 830.9 420.6 825.5 421.0Z" fill="#efd0b3" stroke="#deb490" stroke-width="0.45" opacity="1"/>
</g>
<g transform="translate(714.0 407.0) rotate(10) scale(1 0.93) translate(-714.0 -407.0)">
<circle cx="714.0" cy="407.0" r="42.8" fill="#ece6db"/>
<path d="M707.8 423.2 C698.6 422.4 689.3 426.4 686.2 434.8 C683.1 442.8 690.8 449.9 696.5 453.1 C702.9 454.5 713.3 454.3 716.4 446.3 C719.5 437.9 715.2 428.8 707.8 423.2Z" fill="#f5f1e9" stroke="#cfc5b8" stroke-width="0.45" opacity="1"/>
<path d="M697.7 413.0 C691.9 405.4 682.1 401.0 672.9 404.4 C664.1 407.6 663.6 418.5 664.9 425.1 C668.2 431.0 675.6 438.9 684.5 435.7 C693.6 432.3 698.3 422.6 697.7 413.0Z" fill="#ece6db" stroke="#cfc5b8" stroke-width="0.45" opacity="1"/>
<path d="M696.8 404.8 C695.2 396.1 688.9 388.3 679.7 387.1 C670.9 386.0 665.8 394.6 664.0 400.6 C664.2 406.9 667.0 416.5 675.8 417.6 C685.0 418.8 693.1 412.9 696.8 404.8Z" fill="#f9f6f0" stroke="#cfc5b8" stroke-width="0.45" opacity="1"/>
<path d="M705.4 391.9 C711.2 385.3 713.1 374.9 708.1 366.0 C703.2 357.5 693.1 358.1 687.3 360.2 C682.6 364.1 676.9 372.4 681.8 381.0 C686.8 389.9 696.7 393.5 705.4 391.9Z" fill="#f5f1e9" stroke="#cfc5b8" stroke-width="0.45" opacity="1"/>
<path d="M714.1 389.7 C722.6 387.0 729.7 379.6 729.7 370.1 C729.8 360.9 720.6 356.7 714.4 355.7 C708.2 356.6 698.9 360.6 698.9 369.8 C698.8 379.3 705.7 386.9 714.1 389.7Z" fill="#ece6db" stroke="#cfc5b8" stroke-width="0.45" opacity="1"/>
<path d="M727.3 395.8 C735.0 401.0 745.3 402.0 752.3 396.1 C759.1 390.4 755.8 380.3 752.4 374.7 C747.4 370.4 738.1 365.4 731.3 371.1 C724.3 377.0 723.5 387.3 727.3 395.8Z" fill="#f9f6f0" stroke="#cfc5b8" stroke-width="0.45" opacity="1"/>
<path d="M731.3 406.2 C734.6 414.9 742.8 421.8 752.9 421.4 C762.6 420.9 766.4 411.0 767.2 404.5 C765.8 398.0 761.0 388.5 751.3 389.0 C741.3 389.5 733.8 397.1 731.3 406.2Z" fill="#f5f1e9" stroke="#cfc5b8" stroke-width="0.45" opacity="1"/>
<path d="M728.1 417.1 C725.5 425.3 727.6 435.1 735.3 440.5 C742.7 445.7 751.1 440.8 755.4 436.5 C758.1 431.0 760.0 421.4 752.6 416.1 C745.0 410.7 735.1 411.9 728.1 417.1Z" fill="#ece6db" stroke="#cfc5b8" stroke-width="0.45" opacity="1"/>
<path d="M719.4 423.5 C712.8 428.6 709.1 438.1 712.2 447.6 C715.1 456.8 724.6 458.2 730.4 457.4 C735.5 454.7 742.3 447.9 739.4 438.8 C736.3 429.3 727.7 423.8 719.4 423.5Z" fill="#f9f6f0" stroke="#cfc5b8" stroke-width="0.45" opacity="1"/>
<path d="M716.2 414.9 C709.8 419.1 705.8 427.1 708.0 435.3 C710.2 443.1 718.8 444.5 724.2 444.0 C729.1 441.7 735.8 436.1 733.7 428.2 C731.4 420.1 723.9 415.2 716.2 414.9Z" fill="#ece6db" stroke="#cfc5b8" stroke-width="0.45" opacity="1"/>
<path d="M711.3 414.7 C703.2 414.5 694.9 418.9 692.0 427.3 C689.2 435.3 695.8 441.7 700.7 444.4 C706.3 445.4 715.5 444.6 718.3 436.6 C721.3 428.3 717.7 419.6 711.3 414.7Z" fill="#f9f6f0" stroke="#cfc5b8" stroke-width="0.45" opacity="1"/>
<path d="M706.0 408.7 C701.6 400.9 693.0 395.5 684.0 397.5 C675.3 399.4 673.4 409.4 673.8 415.7 C676.1 421.6 681.9 430.0 690.6 428.1 C699.7 426.2 705.3 417.7 706.0 408.7Z" fill="#f5f1e9" stroke="#cfc5b8" stroke-width="0.45" opacity="1"/>
<path d="M706.5 403.8 C707.1 396.1 703.5 388.1 695.9 384.9 C688.6 381.8 682.2 387.9 679.3 392.5 C678.0 397.7 678.2 406.5 685.5 409.6 C693.1 412.8 701.5 409.7 706.5 403.8Z" fill="#ece6db" stroke="#cfc5b8" stroke-width="0.45" opacity="1"/>
<path d="M711.3 399.3 C717.9 394.3 721.7 385.5 718.8 377.0 C715.9 368.7 706.6 367.9 700.9 368.8 C695.8 371.6 688.9 378.0 691.8 386.3 C694.7 394.8 703.1 399.4 711.3 399.3Z" fill="#f9f6f0" stroke="#cfc5b8" stroke-width="0.45" opacity="1"/>
<path d="M717.1 399.5 C725.5 400.2 734.3 396.5 737.5 388.4 C740.7 380.7 733.9 373.9 728.8 370.8 C723.0 369.5 713.5 369.5 710.3 377.3 C707.0 385.3 710.5 394.1 717.1 399.5Z" fill="#f5f1e9" stroke="#cfc5b8" stroke-width="0.45" opacity="1"/>
<path d="M721.8 404.7 C726.7 412.0 735.5 416.6 744.2 414.0 C752.6 411.5 753.7 401.6 752.9 395.5 C750.2 389.9 743.9 382.2 735.5 384.6 C726.8 387.2 721.9 395.9 721.8 404.7Z" fill="#ece6db" stroke="#cfc5b8" stroke-width="0.45" opacity="1"/>
<path d="M721.2 410.9 C719.3 419.4 721.7 428.6 729.0 432.5 C736.1 436.3 743.6 429.9 747.3 424.9 C749.4 419.1 750.6 409.4 743.6 405.6 C736.3 401.6 727.3 404.6 721.2 410.9Z" fill="#f9f6f0" stroke="#cfc5b8" stroke-width="0.45" opacity="1"/>
<path d="M713.4 409.0 C706.1 408.6 699.2 411.5 697.4 417.4 C695.7 423.0 702.4 427.7 707.1 429.9 C712.3 430.7 720.4 430.4 722.1 424.8 C723.9 418.9 719.7 412.7 713.4 409.0Z" fill="#f9f6f0" stroke="#cfc5b8" stroke-width="0.45" opacity="1"/>
<path d="M712.1 407.6 C708.4 402.0 702.2 398.5 696.5 400.4 C691.1 402.2 690.9 409.7 691.7 414.4 C693.8 418.7 698.5 424.6 704.0 422.8 C709.7 420.9 712.5 414.3 712.1 407.6Z" fill="#f5f1e9" stroke="#cfc5b8" stroke-width="0.45" opacity="1"/>
<path d="M712.5 405.7 C715.6 399.2 715.4 391.6 710.4 387.3 C705.6 383.2 698.6 387.0 694.8 390.3 C692.0 394.6 689.2 402.1 694.0 406.2 C698.9 410.5 706.5 409.6 712.5 405.7Z" fill="#ece6db" stroke="#cfc5b8" stroke-width="0.45" opacity="1"/>
<path d="M714.5 405.0 C722.1 405.0 729.1 401.7 730.5 395.8 C731.8 390.0 724.6 385.6 719.5 383.7 C714.1 383.1 705.7 383.8 704.3 389.6 C702.9 395.5 707.7 401.6 714.5 405.0Z" fill="#f9f6f0" stroke="#cfc5b8" stroke-width="0.45" opacity="1"/>
<path d="M716.0 406.5 C719.4 413.0 725.4 417.6 731.2 416.1 C736.8 414.7 737.4 406.5 736.7 401.3 C734.8 396.4 730.4 389.4 724.8 390.8 C719.0 392.3 715.9 399.1 716.0 406.5Z" fill="#f5f1e9" stroke="#cfc5b8" stroke-width="0.45" opacity="1"/>
<path d="M715.4 408.5 C712.0 414.2 711.6 421.5 716.1 426.4 C720.4 431.2 727.4 428.7 731.3 426.1 C734.2 422.5 737.4 415.8 733.1 411.0 C728.7 406.1 721.3 405.7 715.4 408.5Z" fill="#ece6db" stroke="#cfc5b8" stroke-width="0.45" opacity="1"/>
</g>
<ellipse cx="715.0" cy="416.0" rx="14.3" ry="10.2" fill="none" stroke="#4a4545" stroke-width="2" stroke-dasharray="0.8 0.9"/>
<ellipse cx="715.0" cy="416.0" rx="11.7" ry="7.6" fill="#353132"/>
<ellipse cx="717.0" cy="424.7" rx="9.7" ry="4.6" fill="#f9f6f0" stroke="#cfc5b8" stroke-width=".4"/>
<g style="font-family:'Liberation Serif','DejaVu Serif',serif" text-anchor="middle" fill="#2e2b31" font-weight="bold">
<text id="tv" x="757" y="644" font-style="italic" font-weight="normal" fill="#4d4750" textLength="247" lengthAdjust="spacingAndGlyphs"><tspan font-size="70">T</tspan><tspan font-size="55">ervetuloa</tspan></text>
<text id="yl" x="755" y="681" font-size="20.5" letter-spacing="4.1" fill="#38353b" textLength="253" lengthAdjust="spacing">YLIOPPILASJUHLIIN</text>
<text x="756" y="721.800" font-size="15" textLength="59" lengthAdjust="spacing">TOUKO</text>
<text x="619" y="758.3" font-size="17" letter-spacing="1.4" textLength="91" lengthAdjust="spacing">LAUANTAI</text>
<text x="755.800" y="762.300" font-size="32" font-weight="normal" fill="#b98f77" stroke="#b98f77" stroke-width=".45" letter-spacing="1" textLength="37.5" lengthAdjust="spacingAndGlyphs">30</text>
<text x="893" y="758.3" font-size="17" letter-spacing="1.2" textLength="117" lengthAdjust="spacing">KLO. 14-19.30</text>
<text x="756" y="792.300" font-size="15" letter-spacing="1.2" textLength="40" lengthAdjust="spacingAndGlyphs">2026</text>
<text x="755" y="841.2" font-size="21.500" letter-spacing="1.5" textLength="125" lengthAdjust="spacing">osoitteessa:</text>
<text x="755" y="863.5" font-size="21" letter-spacing="1.5" textLength="335" lengthAdjust="spacing">Ylioppilaankatu 1, 00100 Espoo</text>
<text id="nn" x="755" y="929" font-size="35" font-style="italic" font-weight="normal" fill="#525056" textLength="218" lengthAdjust="spacing">Nimi &amp; Nimi</text>
<text x="755" y="978.5" font-size="15.5" letter-spacing="1.5" textLength="56" lengthAdjust="spacing">R.S.V.P</text>
<text x="755" y="996" font-size="16" letter-spacing="1.4" textLength="278" lengthAdjust="spacing">viim. 25.5.2026 Ilmoitathan myös</text>
<text x="754" y="1013.6" font-size="16" letter-spacing="1.4" textLength="259" lengthAdjust="spacing">mahdolliset ruokaaineallergiat</text>
<text x="755" y="1031" font-size="16" letter-spacing="1.4" textLength="301" lengthAdjust="spacing" xml:space="preserve">puh. 045 200 XXX tai  044 200 XXXX</text>
<text x="754" y="1076" font-size="20" font-style="italic" font-weight="normal" fill="#d9b892">ds</text>
</g>
<g stroke="#67636a" stroke-width="1.25" fill="none">
<path d="M555 724.8 H690.5 M819.4 724.8 H954.4 M555 780.7 H718.4 M790 780.7 H954.4 M690 734.6 V774 M819.4 734.6 V774"/>
</g>
<path d="M744 1080.500 H765" stroke="#dcc3a4" stroke-width="0.8"/>
</svg><div id="layers">
<div class="t" id="lyh" style="left:13px;top:28.3px;font-size:15px;line-height:18px;letter-spacing:1.3px;color:#5b6570;-webkit-text-stroke:.35px #5b6570">LAYERS</div>
<svg style="left:249px;top:31px" width="21" height="22" viewBox="0 0 21 22" fill="none" stroke="#cfcfcf" stroke-width="1"><rect x=".5" y="5" width="16.5" height="16.3" rx=".8"/><path d="M12.5 5 V3.800 C12.5 2 13.800 .6 16 .6 C18.200 .6 19.800 2 19.800 4.200 V5.600"/><circle cx="8.700" cy="13.5" r="1.1" fill="#cfcfcf" stroke="none"/></svg>
<svg style="left:283px;top:37.5px" width="15" height="9" viewBox="0 0 15 9" fill="none" stroke="#8c8c8c" stroke-width="1.8" stroke-linecap="round" stroke-linejoin="round"><path d="M1 1 L7.5 7.8 L14 1"/></svg>
<div class="row" style="top:63.50px;border-bottom:none;border-top:1px solid #dcdcdc">
<svg style="left:14.5px;top:15.5px" width="25" height="19" viewBox="0 0 25 19" fill="#5b6570"><path d="M0 0 H14.5 V3.5 H9.3 V19 H5.3 V3.5 H0 Z"/><path d="M12.3 6.7 H25 V10 H20.5 V19 H16.8 V10 H12.3 Z"/></svg>
<div class="nm" style="left:53px;letter-spacing:-0.7px">Päivä</div>
<svg style="left:249px;top:15.5px" width="21" height="22" viewBox="0 0 21 22" fill="none" stroke="#cfcfcf" stroke-width="1"><rect x=".5" y="5" width="16.5" height="16.3" rx=".8"/><path d="M12.5 5 V3.800 C12.5 2 13.800 .6 16 .6 C18.200 .6 19.800 2 19.800 4.200 V5.600"/><circle cx="8.700" cy="13.5" r="1.1" fill="#cfcfcf" stroke="none"/></svg>
<svg style="left:279.3px;top:17px;opacity:1" width="15.6" height="20.8" viewBox="0 0 17 21" preserveAspectRatio="none" fill="none" stroke="#6a747e" stroke-width="1.25"><rect x="4.8" y=".3" width="7.4" height="2.4" fill="#6a747e" stroke="none"/><path d="M0 3.2 H17" stroke-width="1.1"/><path d="M1.8 4.6 H15.2 V18.5 C15.2 19.5 14.5 20.2 13.5 20.2 H3.5 C2.5 20.2 1.8 19.5 1.8 18.5 Z"/><path d="M5.3 7 V18 M8.5 7 V18 M11.7 7 V18" stroke-width="1.1"/></svg>
</div>
<div class="row" style="top:114.84px;border-bottom:none;border-top:1px solid #dcdcdc">
<svg style="left:14.5px;top:15.5px" width="25" height="19" viewBox="0 0 25 19" fill="#5b6570"><path d="M0 0 H14.5 V3.5 H9.3 V19 H5.3 V3.5 H0 Z"/><path d="M12.3 6.7 H25 V10 H20.5 V19 H16.8 V10 H12.3 Z"/></svg>
<div class="nm" style="left:53px;letter-spacing:0.15px">Allekirjoitus</div>
<svg style="left:249px;top:15.5px" width="21" height="22" viewBox="0 0 21 22" fill="none" stroke="#cfcfcf" stroke-width="1"><rect x=".5" y="5" width="16.5" height="16.3" rx=".8"/><path d="M12.5 5 V3.800 C12.5 2 13.800 .6 16 .6 C18.200 .6 19.800 2 19.800 4.200 V5.600"/><circle cx="8.700" cy="13.5" r="1.1" fill="#cfcfcf" stroke="none"/></svg>
<svg style="left:279.3px;top:17px;opacity:1" width="15.6" height="20.8" viewBox="0 0 17 21" preserveAspectRatio="none" fill="none" stroke="#6a747e" stroke-width="1.25"><rect x="4.8" y=".3" width="7.4" height="2.4" fill="#6a747e" stroke="none"/><path d="M0 3.2 H17" stroke-width="1.1"/><path d="M1.8 4.6 H15.2 V18.5 C15.2 19.5 14.5 20.2 13.5 20.2 H3.5 C2.5 20.2 1.8 19.5 1.8 18.5 Z"/><path d="M5.3 7 V18 M8.5 7 V18 M11.7 7 V18" stroke-width="1.1"/></svg>
</div>
<div class="row" style="top:166.18px;border-bottom:none;border-top:1px solid #dcdcdc">
<svg style="left:14.5px;top:15.5px" width="25" height="19" viewBox="0 0 25 19" fill="#5b6570"><path d="M0 0 H14.5 V3.5 H9.3 V19 H5.3 V3.5 H0 Z"/><path d="M12.3 6.7 H25 V10 H20.5 V19 H16.8 V10 H12.3 Z"/></svg>
<div class="nm" style="left:53px;letter-spacing:-1.9px">RSVP</div>
<svg style="left:249px;top:15.5px" width="21" height="22" viewBox="0 0 21 22" fill="none" stroke="#cfcfcf" stroke-width="1"><rect x=".5" y="5" width="16.5" height="16.3" rx=".8"/><path d="M12.5 5 V3.800 C12.5 2 13.800 .6 16 .6 C18.200 .6 19.800 2 19.800 4.200 V5.600"/><circle cx="8.700" cy="13.5" r="1.1" fill="#cfcfcf" stroke="none"/></svg>
<svg style="left:279.3px;top:17px;opacity:1" width="15.6" height="20.8" viewBox="0 0 17 21" preserveAspectRatio="none" fill="none" stroke="#6a747e" stroke-width="1.25"><rect x="4.8" y=".3" width="7.4" height="2.4" fill="#6a747e" stroke="none"/><path d="M0 3.2 H17" stroke-width="1.1"/><path d="M1.8 4.6 H15.2 V18.5 C15.2 19.5 14.5 20.2 13.5 20.2 H3.5 C2.5 20.2 1.8 19.5 1.8 18.5 Z"/><path d="M5.3 7 V18 M8.5 7 V18 M11.7 7 V18" stroke-width="1.1"/></svg>
</div>
<div class="row" style="top:217.52px;border-bottom:none;border-top:1px solid #dcdcdc">
<svg style="left:14.5px;top:15.5px" width="25" height="19" viewBox="0 0 25 19" fill="#5b6570"><path d="M0 0 H14.5 V3.5 H9.3 V19 H5.3 V3.5 H0 Z"/><path d="M12.3 6.7 H25 V10 H20.5 V19 H16.8 V10 H12.3 Z"/></svg>
<div class="nm" style="left:53px;letter-spacing:-0.1px">Osoite</div>
<svg style="left:249px;top:15.5px" width="21" height="22" viewBox="0 0 21 22" fill="none" stroke="#cfcfcf" stroke-width="1"><rect x=".5" y="5" width="16.5" height="16.3" rx=".8"/><path d="M12.5 5 V3.800 C12.5 2 13.800 .6 16 .6 C18.200 .6 19.800 2 19.800 4.200 V5.600"/><circle cx="8.700" cy="13.5" r="1.1" fill="#cfcfcf" stroke="none"/></svg>
<svg style="left:279.3px;top:17px;opacity:1" width="15.6" height="20.8" viewBox="0 0 17 21" preserveAspectRatio="none" fill="none" stroke="#6a747e" stroke-width="1.25"><rect x="4.8" y=".3" width="7.4" height="2.4" fill="#6a747e" stroke="none"/><path d="M0 3.2 H17" stroke-width="1.1"/><path d="M1.8 4.6 H15.2 V18.5 C15.2 19.5 14.5 20.2 13.5 20.2 H3.5 C2.5 20.2 1.8 19.5 1.8 18.5 Z"/><path d="M5.3 7 V18 M8.5 7 V18 M11.7 7 V18" stroke-width="1.1"/></svg>
</div>
<div class="row" style="top:268.86px;border-bottom:none;border-top:1px solid #dcdcdc">
<svg style="left:14.5px;top:15.5px" width="25" height="19" viewBox="0 0 25 19" fill="#5b6570"><path d="M0 0 H14.5 V3.5 H9.3 V19 H5.3 V3.5 H0 Z"/><path d="M12.3 6.7 H25 V10 H20.5 V19 H16.8 V10 H12.3 Z"/></svg>
<div class="nm" style="left:53px;letter-spacing:-0.4px">Klo.</div>
<svg style="left:249px;top:15.5px" width="21" height="22" viewBox="0 0 21 22" fill="none" stroke="#cfcfcf" stroke-width="1"><rect x=".5" y="5" width="16.5" height="16.3" rx=".8"/><path d="M12.5 5 V3.800 C12.5 2 13.800 .6 16 .6 C18.200 .6 19.800 2 19.800 4.200 V5.600"/><circle cx="8.700" cy="13.5" r="1.1" fill="#cfcfcf" stroke="none"/></svg>
<svg style="left:279.3px;top:17px;opacity:1" width="15.6" height="20.8" viewBox="0 0 17 21" preserveAspectRatio="none" fill="none" stroke="#6a747e" stroke-width="1.25"><rect x="4.8" y=".3" width="7.4" height="2.4" fill="#6a747e" stroke="none"/><path d="M0 3.2 H17" stroke-width="1.1"/><path d="M1.8 4.6 H15.2 V18.5 C15.2 19.5 14.5 20.2 13.5 20.2 H3.5 C2.5 20.2 1.8 19.5 1.8 18.5 Z"/><path d="M5.3 7 V18 M8.5 7 V18 M11.7 7 V18" stroke-width="1.1"/></svg>
</div>
<div class="row" style="top:320.20px;border-bottom:none;border-top:1px solid #dcdcdc">
<svg style="left:14.5px;top:15.5px" width="25" height="19" viewBox="0 0 25 19" fill="#5b6570"><path d="M0 0 H14.5 V3.5 H9.3 V19 H5.3 V3.5 H0 Z"/><path d="M12.3 6.7 H25 V10 H20.5 V19 H16.8 V10 H12.3 Z"/></svg>
<div class="nm" style="left:53px">Vuosi</div>
<svg style="left:249px;top:15.5px" width="21" height="22" viewBox="0 0 21 22" fill="none" stroke="#cfcfcf" stroke-width="1"><rect x=".5" y="5" width="16.5" height="16.3" rx=".8"/><path d="M12.5 5 V3.800 C12.5 2 13.800 .6 16 .6 C18.200 .6 19.800 2 19.800 4.200 V5.600"/><circle cx="8.700" cy="13.5" r="1.1" fill="#cfcfcf" stroke="none"/></svg>
<svg style="left:279.3px;top:17px;opacity:1" width="15.6" height="20.8" viewBox="0 0 17 21" preserveAspectRatio="none" fill="none" stroke="#6a747e" stroke-width="1.25"><rect x="4.8" y=".3" width="7.4" height="2.4" fill="#6a747e" stroke="none"/><path d="M0 3.2 H17" stroke-width="1.1"/><path d="M1.8 4.6 H15.2 V18.5 C15.2 19.5 14.5 20.2 13.5 20.2 H3.5 C2.5 20.2 1.8 19.5 1.8 18.5 Z"/><path d="M5.3 7 V18 M8.5 7 V18 M11.7 7 V18" stroke-width="1.1"/></svg>
</div>
<div class="row" style="top:371.54px;border-bottom:none;border-top:1px solid #dcdcdc">
<svg style="left:14.5px;top:15.5px" width="25" height="19" viewBox="0 0 25 19" fill="#5b6570"><path d="M0 0 H14.5 V3.5 H9.3 V19 H5.3 V3.5 H0 Z"/><path d="M12.3 6.7 H25 V10 H20.5 V19 H16.8 V10 H12.3 Z"/></svg>
<div class="nm" style="left:53px">Kuukausi</div>
<svg style="left:249px;top:15.5px" width="21" height="22" viewBox="0 0 21 22" fill="none" stroke="#cfcfcf" stroke-width="1"><rect x=".5" y="5" width="16.5" height="16.3" rx=".8"/><path d="M12.5 5 V3.800 C12.5 2 13.800 .6 16 .6 C18.200 .6 19.800 2 19.800 4.200 V5.600"/><circle cx="8.700" cy="13.5" r="1.1" fill="#cfcfcf" stroke="none"/></svg>
<svg style="left:279.3px;top:17px;opacity:1" width="15.6" height="20.8" viewBox="0 0 17 21" preserveAspectRatio="none" fill="none" stroke="#6a747e" stroke-width="1.25"><rect x="4.8" y=".3" width="7.4" height="2.4" fill="#6a747e" stroke="none"/><path d="M0 3.2 H17" stroke-width="1.1"/><path d="M1.8 4.6 H15.2 V18.5 C15.2 19.5 14.5 20.2 13.5 20.2 H3.5 C2.5 20.2 1.8 19.5 1.8 18.5 Z"/><path d="M5.3 7 V18 M8.5 7 V18 M11.7 7 V18" stroke-width="1.1"/></svg>
</div>
<div class="row" style="top:422.88px;border-bottom:none;border-top:1px solid #dcdcdc">
<svg style="left:14.5px;top:15.5px" width="25" height="19" viewBox="0 0 25 19" fill="#5b6570"><path d="M0 0 H14.5 V3.5 H9.3 V19 H5.3 V3.5 H0 Z"/><path d="M12.3 6.7 H25 V10 H20.5 V19 H16.8 V10 H12.3 Z"/></svg>
<div class="nm" style="left:53px">Viikkopäivä</div>
<svg style="left:249px;top:15.5px" width="21" height="22" viewBox="0 0 21 22" fill="none" stroke="#cfcfcf" stroke-width="1"><rect x=".5" y="5" width="16.5" height="16.3" rx=".8"/><path d="M12.5 5 V3.800 C12.5 2 13.800 .6 16 .6 C18.200 .6 19.800 2 19.800 4.200 V5.600"/><circle cx="8.700" cy="13.5" r="1.1" fill="#cfcfcf" stroke="none"/></svg>
<svg style="left:279.3px;top:17px;opacity:1" width="15.6" height="20.8" viewBox="0 0 17 21" preserveAspectRatio="none" fill="none" stroke="#6a747e" stroke-width="1.25"><rect x="4.8" y=".3" width="7.4" height="2.4" fill="#6a747e" stroke="none"/><path d="M0 3.2 H17" stroke-width="1.1"/><path d="M1.8 4.6 H15.2 V18.5 C15.2 19.5 14.5 20.2 13.5 20.2 H3.5 C2.5 20.2 1.8 19.5 1.8 18.5 Z"/><path d="M5.3 7 V18 M8.5 7 V18 M11.7 7 V18" stroke-width="1.1"/></svg>
</div>
<div class="row" style="top:474.22px;border-bottom:none;border-top:1px solid #dcdcdc">
<svg style="left:14.5px;top:15.5px" width="25" height="19" viewBox="0 0 25 19" fill="#5b6570"><path d="M0 0 H14.5 V3.5 H9.3 V19 H5.3 V3.5 H0 Z"/><path d="M12.3 6.7 H25 V10 H20.5 V19 H16.8 V10 H12.3 Z"/></svg>
<div class="nm" style="left:53px">Ylioppilasju...</div>
<svg style="left:249px;top:15.5px" width="21" height="22" viewBox="0 0 21 22" fill="none" stroke="#cfcfcf" stroke-width="1"><rect x=".5" y="5" width="16.5" height="16.3" rx=".8"/><path d="M12.5 5 V3.800 C12.5 2 13.800 .6 16 .6 C18.200 .6 19.800 2 19.800 4.200 V5.600"/><circle cx="8.700" cy="13.5" r="1.1" fill="#cfcfcf" stroke="none"/></svg>
<svg style="left:279.3px;top:17px;opacity:1" width="15.6" height="20.8" viewBox="0 0 17 21" preserveAspectRatio="none" fill="none" stroke="#6a747e" stroke-width="1.25"><rect x="4.8" y=".3" width="7.4" height="2.4" fill="#6a747e" stroke="none"/><path d="M0 3.2 H17" stroke-width="1.1"/><path d="M1.8 4.6 H15.2 V18.5 C15.2 19.5 14.5 20.2 13.5 20.2 H3.5 C2.5 20.2 1.8 19.5 1.8 18.5 Z"/><path d="M5.3 7 V18 M8.5 7 V18 M11.7 7 V18" stroke-width="1.1"/></svg>
</div>
<div class="row" style="top:525.56px;border-bottom:none;border-top:1px solid #dcdcdc">
<svg style="left:14.5px;top:15.5px" width="25" height="19" viewBox="0 0 25 19" fill="#5b6570"><path d="M0 0 H14.5 V3.5 H9.3 V19 H5.3 V3.5 H0 Z"/><path d="M12.3 6.7 H25 V10 H20.5 V19 H16.8 V10 H12.3 Z"/></svg>
<div class="nm" style="left:53px">Tervetuloa</div>
<svg style="left:249px;top:15.5px" width="21" height="22" viewBox="0 0 21 22" fill="none" stroke="#cfcfcf" stroke-width="1"><rect x=".5" y="5" width="16.5" height="16.3" rx=".8"/><path d="M12.5 5 V3.800 C12.5 2 13.800 .6 16 .6 C18.200 .6 19.800 2 19.800 4.200 V5.600"/><circle cx="8.700" cy="13.5" r="1.1" fill="#cfcfcf" stroke="none"/></svg>
<svg style="left:279.3px;top:17px;opacity:1" width="15.6" height="20.8" viewBox="0 0 17 21" preserveAspectRatio="none" fill="none" stroke="#6a747e" stroke-width="1.25"><rect x="4.8" y=".3" width="7.4" height="2.4" fill="#6a747e" stroke="none"/><path d="M0 3.2 H17" stroke-width="1.1"/><path d="M1.8 4.6 H15.2 V18.5 C15.2 19.5 14.5 20.2 13.5 20.2 H3.5 C2.5 20.2 1.8 19.5 1.8 18.5 Z"/><path d="M5.3 7 V18 M8.5 7 V18 M11.7 7 V18" stroke-width="1.1"/></svg>
</div>
<div class="row" style="top:576.90px;border-bottom:none;border-top:1px solid #dcdcdc">
<svg style="left:13px;top:15px" width="26" height="21" viewBox="0 0 26 21"><rect x=".7" y=".7" width="24.6" height="19.6" rx="1.8" fill="none" stroke="#5b6570" stroke-width="1.3"/><circle cx="6" cy="5.8" r="1.9" fill="#5b6570"/><path d="M3.3 16.3 L9.8 9 L13.2 12.6 L17 7.6 L22.7 16.3 Z" fill="#5b6570"/></svg>
<div class="nm" style="left:50.5px">Dreamstuff-...</div>
<svg style="left:248px;top:14.5px" width="19" height="22" viewBox="0 0 19 22" fill="none" stroke="#5b6570" stroke-width="1.3"><rect x=".8" y="6.3" width="16.9" height="15" rx="1.8"/><path d="M5.3 6.3 V4.5 C5.3 2.3 7 .8 9.25 .8 C11.5 .8 13.2 2.3 13.2 4.5 V6.3"/><circle cx="9.25" cy="14" r="1.3" fill="#5b6570" stroke="none"/></svg>
<svg style="left:279.3px;top:17px;opacity:1" width="15.6" height="20.8" viewBox="0 0 17 21" preserveAspectRatio="none" fill="none" stroke="#c9c9c9" stroke-width="1.25"><rect x="4.8" y=".3" width="7.4" height="2.4" fill="#c9c9c9" stroke="none"/><path d="M0 3.2 H17" stroke-width="1.1"/><path d="M1.8 4.6 H15.2 V18.5 C15.2 19.5 14.5 20.2 13.5 20.2 H3.5 C2.5 20.2 1.8 19.5 1.8 18.5 Z"/><path d="M5.3 7 V18 M8.5 7 V18 M11.7 7 V18" stroke-width="1.1"/></svg>
</div>
<div class="abs" style="left:0;top:628.24px;width:308px;height:1px;background:#dcdcdc"></div>
</div>
<div id="strip"><svg style="left:11.5px;top:492.5px" width="9" height="15" viewBox="0 0 9 15" fill="none" stroke="#4a4a4a" stroke-width="2.1" stroke-linecap="round" stroke-linejoin="round"><path d="M1.5 1.5 L7.7 7.5 L1.5 13.5"/></svg></div>
<div id="bot">
  <div class="t" id="pg1" style="left:545px;top:9px;line-height:22px">Page 1</div>
  <svg style="left:614px;top:9px" width="24" height="24" viewBox="0 0 24 24" fill="#555"><rect x="0" y="0" width="10.500" height="10.500" rx="2.200"/><rect x="13.500" y="0" width="10.500" height="10.500" rx="2.200"/><rect x="0" y="13.500" width="10.500" height="10.500" rx="2.200"/><rect x="13.500" y="13.500" width="10.500" height="10.500" rx="2.200"/></svg>
  <div class="vd" style="left:654px"></div>
  <svg style="left:666px;top:8.500px" width="15" height="24" viewBox="0 0 15 24"><path d="M13.500 1 L1.500 12 L13.500 23 Z" fill="#b0b0b0" stroke="#b0b0b0" stroke-width="2" stroke-linejoin="round"/></svg>
  <div class="vd" style="left:693px"></div>
  <div class="t" id="pg2" style="left:701px;top:9px;line-height:22px">Page</div>
  <div class="abs" style="left:747.5px;top:2.6px;width:49px;height:34px;border:1px solid #cfcfcf;border-radius:4px;background:linear-gradient(#fff,#f3f3f3)"></div>
  <div class="t" style="left:747.500px;top:10px;width:49px;text-align:center;line-height:22px;font-size:18px">1</div>
  <div class="t" id="of1" style="left:803px;top:9px;line-height:22px">of 1</div>
  <div class="vd" style="left:843px"></div>
  <svg style="left:854px;top:8.500px" width="15" height="24" viewBox="0 0 15 24"><path d="M1.500 1 L13.500 12 L1.500 23 Z" fill="#b0b0b0" stroke="#b0b0b0" stroke-width="2" stroke-linejoin="round"/></svg>
  <div class="vd" style="left:881px"></div>
  <svg style="left:898px;top:8px" width="22" height="25" viewBox="0 0 22 25" fill="none" stroke="#555" stroke-width="1.500" stroke-linejoin="round"><path d="M15 6 V1 H1 V17.500 H6"/><path d="M6 6.500 H21 V24 H6 Z" fill="#f1f1f1"/><path d="M6 17.500 H13 M10.500 14.800 L13.300 17.500 L10.500 20.200" stroke-width="1.300"/></svg>
  <svg style="left:945.500px;top:7px" width="21" height="26" viewBox="0 0 21 26" fill="none" stroke="#bdbdbd" stroke-width="1.300"><rect x="5.500" y=".3" width="10" height="3" fill="#bdbdbd" stroke="none"/><path d="M0 4 H21"/><path d="M2.500 5.800 H18.500 V23 C18.500 24.200 17.700 25 16.500 25 H4.500 C3.300 25 2.500 24.200 2.500 23 Z"/><path d="M6.800 9 V22 M10.500 9 V22 M14.200 9 V22"/></svg>
  <div class="vd" style="left:1271px"></div>
  <div class="abs" style="left:1283px;top:20px;width:16px;height:2px;background:#4a5560"></div>
  <div class="vd" style="left:1310px"></div>
  <div class="t" id="zm" style="left:1325px;top:11px;line-height:22px;font-weight:bold;font-size:19px;letter-spacing:0;color:#4a5560">37%</div>
  <div class="vd" style="left:1380px"></div>
  <div class="abs" style="left:1392px;top:20px;width:16px;height:2px;background:#4a5560"></div>
  <div class="abs" style="left:1399px;top:13px;width:2px;height:16px;background:#4a5560"></div>
  <div class="vd" style="left:1419.500px"></div>
</div>
</body>
</html>
